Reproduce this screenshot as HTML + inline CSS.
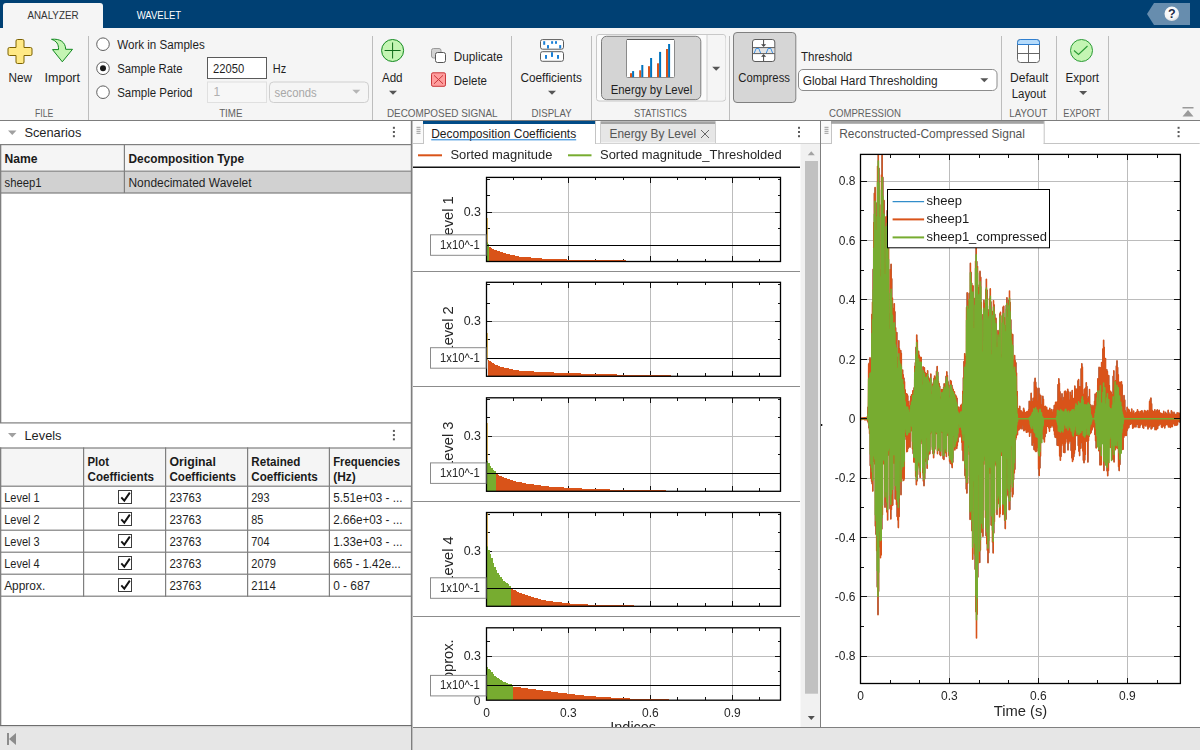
<!DOCTYPE html>
<html lang="en"><head><meta charset="utf-8"><title>Wavelet Signal Analyzer</title>
<style>
html,body{margin:0;padding:0;}
body{width:1200px;height:750px;overflow:hidden;background:#fff;font-family:"Liberation Sans",sans-serif;font-size:12px;color:#1a1a1a;}
#app{position:relative;width:1200px;height:750px;overflow:hidden;background:#fff;}
.abs{position:absolute;}
.t{position:absolute;white-space:nowrap;line-height:1;}
/* header */
.hdr{position:absolute;left:0;top:0;width:1200px;height:28px;background:#004073;}
.tabA{position:absolute;left:3px;top:3px;width:100px;height:25px;background:#f5f5f5;border-radius:3px 3px 0 0;}
.strip{position:absolute;left:0;top:28px;width:1200px;height:92px;background:#f5f5f5;}
.stripline{position:absolute;left:0;top:120px;width:1200px;height:1px;background:#7d7d7d;}
.vsep{position:absolute;width:1px;background:#c9c9c9;top:36px;height:83px;}
.seclbl{position:absolute;top:107px;font-size:11px;color:#666;white-space:nowrap;line-height:1;transform:translateX(-50%);}
.statusbar{position:absolute;left:0;top:727px;width:1200px;height:23px;background:#f0f0f0;border-top:1px solid #b5b5b5;box-sizing:border-box;}

.gl{will-change:transform;}

</style></head>
<body>
<div id="app">
<div class="hdr"></div><div class="tabA"></div><div class="strip"></div><div class="stripline"></div>
<svg class="abs" style="left:0;top:0" width="1200" height="121" viewBox="0 0 1200 121" font-family='"Liberation Sans",sans-serif'>
<text x="27.5" y="18.7" font-size="11" fill="#333" font-weight="normal" text-anchor="start" textLength="51" lengthAdjust="spacingAndGlyphs">ANALYZER</text>
<text x="136.7" y="18.7" font-size="11" fill="#fff" font-weight="normal" text-anchor="start" textLength="44.5" lengthAdjust="spacingAndGlyphs">WAVELET</text>
<path d="M1147 14L1154 3H1190V25H1154Z" fill="#678dae"/>
<defs><radialGradient id="hg" cx="0.45" cy="0.35" r="0.7"><stop offset="0" stop-color="#fff"/><stop offset="0.7" stop-color="#f4f4f4"/><stop offset="1" stop-color="#c9ced3"/></radialGradient></defs>
<circle cx="1171.8" cy="13.8" r="7.3" fill="url(#hg)"/>
<text x="1171.8" y="18.3" font-size="12.5" fill="#1d2b45" font-weight="bold" text-anchor="middle">?</text>
<rect x="88" y="36" width="1" height="84" fill="#bdbdbd"/>
<rect x="372" y="36" width="1" height="84" fill="#bdbdbd"/>
<rect x="511" y="36" width="1" height="84" fill="#bdbdbd"/>
<rect x="591" y="36" width="1" height="84" fill="#bdbdbd"/>
<rect x="729" y="36" width="1" height="84" fill="#bdbdbd"/>
<rect x="1001" y="36" width="1" height="84" fill="#bdbdbd"/>
<rect x="1056" y="36" width="1" height="84" fill="#bdbdbd"/>
<rect x="1108" y="36" width="1" height="84" fill="#bdbdbd"/>
<text x="44.2" y="116.7" font-size="11" fill="#616161" font-weight="normal" text-anchor="middle" textLength="18.3" lengthAdjust="spacingAndGlyphs">FILE</text>
<text x="230.8" y="116.7" font-size="11" fill="#616161" font-weight="normal" text-anchor="middle" textLength="23.3" lengthAdjust="spacingAndGlyphs">TIME</text>
<text x="442.2" y="116.7" font-size="11" fill="#616161" font-weight="normal" text-anchor="middle" textLength="110.6" lengthAdjust="spacingAndGlyphs">DECOMPOSED SIGNAL</text>
<text x="551.6" y="116.7" font-size="11" fill="#616161" font-weight="normal" text-anchor="middle" textLength="40" lengthAdjust="spacingAndGlyphs">DISPLAY</text>
<text x="660.3" y="116.7" font-size="11" fill="#616161" font-weight="normal" text-anchor="middle" textLength="52.7" lengthAdjust="spacingAndGlyphs">STATISTICS</text>
<text x="865" y="116.7" font-size="11" fill="#616161" font-weight="normal" text-anchor="middle" textLength="72" lengthAdjust="spacingAndGlyphs">COMPRESSION</text>
<text x="1028.3" y="116.7" font-size="11" fill="#616161" font-weight="normal" text-anchor="middle" textLength="38" lengthAdjust="spacingAndGlyphs">LAYOUT</text>
<text x="1082" y="116.7" font-size="11" fill="#616161" font-weight="normal" text-anchor="middle" textLength="37.4" lengthAdjust="spacingAndGlyphs">EXPORT</text>
<path d="M17.5 39.5h5a1.5 1.5 0 0 1 1.5 1.5v6.5h6.5a1.5 1.5 0 0 1 1.5 1.5v5a1.5 1.5 0 0 1 -1.5 1.5h-6.5v6.500a1.5 1.5 0 0 1 -1.5 1.5h-5a1.5 1.5 0 0 1 -1.5 -1.5v-6.5h-6.5a1.5 1.5 0 0 1 -1.5 -1.5v-5a1.5 1.5 0 0 1 1.500 -1.5h6.5v-6.5a1.500 1.5 0 0 1 1.5 -1.5z" fill="#ffe985" stroke="#7d6200" stroke-width="1"/>
<text x="8.5" y="82" font-size="12" fill="#1f1f1f" font-weight="normal" text-anchor="start" textLength="23.5" lengthAdjust="spacingAndGlyphs">New</text>
<path d="M51.500 39.300C60 38.500 65.500 42 65.700 49.300L72.500 49.300L62.300 61.800L52.500 49.600L58.500 49.600C58.800 44 56.500 41 51.500 39.300Z" fill="#c4f5b3" stroke="#12891f" stroke-width="1" stroke-linejoin="round"/>
<text x="44.5" y="82" font-size="12" fill="#1f1f1f" font-weight="normal" text-anchor="start" textLength="35.5" lengthAdjust="spacingAndGlyphs">Import</text>
<circle cx="103" cy="44.2" r="6.300" fill="#fff" stroke="#5f5f5f" stroke-width="1"/>
<circle cx="103" cy="68.3" r="6.300" fill="#fff" stroke="#5f5f5f" stroke-width="1"/>
<circle cx="103" cy="92.2" r="6.300" fill="#fff" stroke="#5f5f5f" stroke-width="1"/>
<circle cx="103" cy="68.3" r="3" fill="#1a1a1a"/>
<text x="117.2" y="49.0" font-size="12" fill="#1f1f1f" font-weight="normal" text-anchor="start" textLength="87.5" lengthAdjust="spacingAndGlyphs">Work in Samples</text>
<text x="117.2" y="72.8" font-size="12" fill="#1f1f1f" font-weight="normal" text-anchor="start" textLength="65.3" lengthAdjust="spacingAndGlyphs">Sample Rate</text>
<text x="117.2" y="96.7" font-size="12" fill="#1f1f1f" font-weight="normal" text-anchor="start" textLength="75.3" lengthAdjust="spacingAndGlyphs">Sample Period</text>
<rect x="207.500" y="57.500" width="59" height="21" fill="#fff" stroke="#5a5a5a"/>
<text x="213" y="72.5" font-size="12" fill="#1f1f1f" font-weight="normal" text-anchor="start" textLength="31.2" lengthAdjust="spacingAndGlyphs">22050</text>
<text x="272.8" y="72.5" font-size="12" fill="#1f1f1f" font-weight="normal" text-anchor="start" textLength="13.4" lengthAdjust="spacingAndGlyphs">Hz</text>
<rect x="207.500" y="82" width="59" height="20.500" fill="#f7f7f7" stroke="#e0e0e0"/>
<text x="213.5" y="96.4" font-size="12" fill="#b0b0b0" font-weight="normal" text-anchor="start">1</text>
<rect x="269.500" y="82" width="99" height="20.500" rx="4" fill="#f5f5f5" stroke="#cfcfcf"/>
<text x="274.5" y="96.5" font-size="12" fill="#a8a8a8" font-weight="normal" text-anchor="start" textLength="42.2" lengthAdjust="spacingAndGlyphs">seconds</text>
<path d="M352.3 89.8h8l-4.0 4z" fill="#b5b5b5"/>
<circle cx="392.600" cy="50.5" r="11" fill="#c4f5b3" stroke="#12891f" stroke-width="1"/>
<path d="M392.6 42.500v16M384.600 50.5h16" stroke="#0f6a18" stroke-width="1" fill="none"/>
<text x="381.9" y="82" font-size="12" fill="#1f1f1f" font-weight="normal" text-anchor="start" textLength="20.7" lengthAdjust="spacingAndGlyphs">Add</text>
<path d="M389.0 90.7h8l-4.0 4z" fill="#555"/>
<rect x="431.500" y="48.500" width="9.500" height="9.500" rx="2" fill="#d2d2d2" stroke="#9a9a9a"/>
<rect x="435.500" y="52.500" width="10" height="10" rx="2" fill="#fff" stroke="#555"/>
<text x="453.8" y="61" font-size="12" fill="#1f1f1f" font-weight="normal" text-anchor="start" textLength="49" lengthAdjust="spacingAndGlyphs">Duplicate</text>
<rect x="431.500" y="72.800" width="14" height="13.500" rx="1.5" fill="#ff9d9d" stroke="#c8373a"/>
<path d="M434 75.300l9 8.500M443 75.300l-9 8.500" stroke="#c8373a" stroke-width="1" fill="none"/>
<text x="453.8" y="84.8" font-size="12" fill="#1f1f1f" font-weight="normal" text-anchor="start" textLength="33.2" lengthAdjust="spacingAndGlyphs">Delete</text>
<rect x="540.500" y="39.600" width="23" height="9.600" rx="2" fill="#fff" stroke="#5c5c5c"/>
<rect x="540.500" y="51.700" width="23" height="9.600" rx="2" fill="#fff" stroke="#5c5c5c"/>
<rect x="543.2" y="41.2" width="2" height="3.6" fill="#1a7fd6"/>
<rect x="547" y="45.1" width="2" height="3.4" fill="#1a7fd6"/>
<rect x="551.1" y="41.2" width="2" height="2.6" fill="#1a7fd6"/>
<rect x="555" y="41.2" width="2" height="2.6" fill="#1a7fd6"/>
<rect x="559.2" y="45.1" width="2" height="3.4" fill="#1a7fd6"/>
<rect x="545" y="55" width="2" height="3.8" fill="#1a7fd6"/>
<rect x="551" y="52.2" width="2" height="4.7" fill="#1a7fd6"/>
<rect x="557" y="55" width="2" height="3.8" fill="#1a7fd6"/>
<text x="520.5" y="82" font-size="12" fill="#1f1f1f" font-weight="normal" text-anchor="start" textLength="61.3" lengthAdjust="spacingAndGlyphs">Coefficients</text>
<path d="M548.0 90.7h8l-4.0 4z" fill="#555"/>
<rect x="596.500" y="34.500" width="129" height="66.500" rx="2.500" fill="#fbfbfb" stroke="#c8c8c8"/>
<path d="M707 35h14.500a4 4 0 0 1 4 4v57.500a4 4 0 0 1 -4 4h-14.500z" fill="#f5f5f5"/>
<rect x="706.500" y="35" width="1" height="66" fill="#d0d0d0"/>
<rect x="601.500" y="36.300" width="99.300" height="63.300" rx="5" fill="#d4d4d4" stroke="#7d7d7d"/>
<rect x="626.500" y="39.500" width="48" height="38" rx="1" fill="#fff" stroke="#8a8a8a"/>
<rect x="627" y="39" width="47" height="1" fill="#5a5a5a"/>
<rect x="630" y="73.2" width="2" height="4.0" fill="#d95319"/>
<rect x="632.1" y="71.1" width="2" height="6.1" fill="#0072bd"/>
<rect x="639.2" y="70.3" width="2" height="6.9" fill="#d95319"/>
<rect x="641.3" y="65" width="2" height="12.2" fill="#0072bd"/>
<rect x="648" y="66.2" width="2" height="11.0" fill="#d95319"/>
<rect x="650.1" y="58" width="2" height="19.2" fill="#0072bd"/>
<rect x="657" y="63.3" width="2" height="13.9" fill="#d95319"/>
<rect x="659.1" y="51.9" width="2" height="25.3" fill="#0072bd"/>
<rect x="666" y="49" width="2" height="28.2" fill="#d95319"/>
<rect x="668.1" y="44" width="2" height="33.2" fill="#0072bd"/>
<text x="610.7" y="94.3" font-size="12" fill="#1f1f1f" font-weight="normal" text-anchor="start" textLength="81.5" lengthAdjust="spacingAndGlyphs">Energy by Level</text>
<path d="M712.2 66.7h8l-4.0 4z" fill="#555"/>
<rect x="733.500" y="32.500" width="62.300" height="70" rx="3.500" fill="#d6d6d6" stroke="#808080"/>
<rect x="752.500" y="39.500" width="22.300" height="22" rx="2.500" fill="#fff" stroke="#5c5c5c"/>
<rect x="753" y="48" width="21.300" height="5.500" fill="#e4e4e4"/>
<path d="M752.500 47.600h22.300M752.500 53.600h22.300" stroke="#5c5c5c" stroke-width="1" fill="none"/>
<path d="M754.300 53l1.800 -4.500h2.700l1.800 4.500M766.300 53l1.800 -4.500h2.700l1.800 4.500" stroke="#3b92e6" stroke-width="1" fill="none"/>
<path d="M763.600 40v6M763.600 61v-6" stroke="#4a4a4a" stroke-width="1" fill="none"/>
<path d="M761 44.300h5.200l-2.600 2.800zM761 56.800h5.200l-2.600 -2.800z" fill="#4a4a4a"/>
<text x="738.3" y="81.7" font-size="12" fill="#1f1f1f" font-weight="normal" text-anchor="start" textLength="51.7" lengthAdjust="spacingAndGlyphs">Compress</text>
<text x="801" y="61" font-size="12" fill="#1f1f1f" font-weight="normal" text-anchor="start" textLength="51.3" lengthAdjust="spacingAndGlyphs">Threshold</text>
<rect x="798.500" y="69.500" width="198.500" height="21" rx="4.500" fill="#fff" stroke="#8c8c8c"/>
<text x="802.7" y="84.7" font-size="12" fill="#1f1f1f" font-weight="normal" text-anchor="start" textLength="135" lengthAdjust="spacingAndGlyphs">Global Hard Thresholding</text>
<path d="M980.3 78.2h8l-4.0 4z" fill="#555"/>
<rect x="1017.500" y="39.500" width="22" height="23" rx="3" fill="#fff" stroke="#666"/>
<path d="M1017.500 44.500v-2a3 3 0 0 1 3 -3h16a3 3 0 0 1 3 3v2z" fill="#b5dbfb" stroke="#2f7fd0" stroke-width="1"/>
<path d="M1018 53.500h21M1028.500 45v17.500" stroke="#666" stroke-width="1" fill="none"/>
<text x="1010" y="81.7" font-size="12" fill="#1f1f1f" font-weight="normal" text-anchor="start" textLength="38.3" lengthAdjust="spacingAndGlyphs">Default</text>
<text x="1011.7" y="98.3" font-size="12" fill="#1f1f1f" font-weight="normal" text-anchor="start" textLength="34.3" lengthAdjust="spacingAndGlyphs">Layout</text>
<circle cx="1081.500" cy="50.500" r="11" fill="#c4f5b3" stroke="#2a9a35"/>
<path d="M1074 50.500l4.500 4l9 -8.500" stroke="#2a9a35" stroke-width="1.100" fill="none"/>
<text x="1065.5" y="81.7" font-size="12" fill="#1f1f1f" font-weight="normal" text-anchor="start" textLength="33.5" lengthAdjust="spacingAndGlyphs">Export</text>
<path d="M1079.2 91.0h8l-4.0 4z" fill="#555"/>
<rect x="1182.500" y="107" width="11" height="1.500" fill="#9a9a9a"/>
<path d="M1182.500 116.500l5.500 -6.500l5.500 6.500z" fill="#9a9a9a"/>
</svg>
<svg class="abs" style="left:0;top:121px" width="413" height="629" viewBox="0 121 413 629" font-family='"Liberation Sans",sans-serif'>
<rect x="0" y="121" width="413" height="606" fill="#fff"/>
<path d="M8 130.500h8.500l-4.250 4.500z" fill="#a0a0a0"/>
<text x="24.4" y="137" font-size="13" fill="#1f1f1f" font-weight="normal" text-anchor="start" textLength="57" lengthAdjust="spacingAndGlyphs">Scenarios</text>
<rect x="392.9" y="126.8" width="2" height="2" fill="#595959"/><rect x="392.9" y="131" width="2" height="2" fill="#595959"/><rect x="392.9" y="135.2" width="2" height="2" fill="#595959"/>
<rect x="1" y="145" width="410" height="26" fill="#f5f5f5"/>
<rect x="1" y="172" width="410" height="21" fill="#d1d1d1"/>
<rect x="0" y="144" width="412" height="1.200" fill="#7f7f7f"/>
<rect x="0" y="170.600" width="412" height="1.200" fill="#7f7f7f"/>
<rect x="0" y="192.400" width="412" height="1.200" fill="#7f7f7f"/>
<rect x="123.800" y="144" width="1.200" height="49" fill="#7f7f7f"/>
<text x="4.6" y="163.1" font-size="12" fill="#1a1a1a" font-weight="bold" text-anchor="start" textLength="33" lengthAdjust="spacingAndGlyphs">Name</text>
<text x="128.5" y="163.1" font-size="12" fill="#1a1a1a" font-weight="bold" text-anchor="start" textLength="115.5" lengthAdjust="spacingAndGlyphs">Decomposition Type</text>
<text x="4.5" y="186.7" font-size="12" fill="#1f1f1f" font-weight="normal" text-anchor="start" textLength="37" lengthAdjust="spacingAndGlyphs">sheep1</text>
<text x="128.5" y="186.7" font-size="12" fill="#1f1f1f" font-weight="normal" text-anchor="start" textLength="123" lengthAdjust="spacingAndGlyphs">Nondecimated Wavelet</text>
<rect x="0" y="144" width="1.300" height="279" fill="#7f7f7f"/>
<rect x="410.800" y="121" width="1.700" height="629" fill="#7f7f7f"/>
<rect x="0" y="422.300" width="412" height="1.200" fill="#7f7f7f"/>
<path d="M8 433h8.500l-4.250 4.500z" fill="#a0a0a0"/>
<text x="24.5" y="440.2" font-size="13" fill="#1f1f1f" font-weight="normal" text-anchor="start" textLength="37" lengthAdjust="spacingAndGlyphs">Levels</text>
<rect x="392.9" y="429.90000000000003" width="2" height="2" fill="#595959"/><rect x="392.9" y="434.1" width="2" height="2" fill="#595959"/><rect x="392.9" y="438.3" width="2" height="2" fill="#595959"/>
<rect x="1" y="448" width="410" height="38" fill="#f5f5f5"/>
<rect x="0" y="447.4" width="412" height="1.200" fill="#7f7f7f"/>
<rect x="0" y="485.6" width="412" height="1.200" fill="#7f7f7f"/>
<rect x="0" y="507.6" width="412" height="1.200" fill="#7f7f7f"/>
<rect x="0" y="529.6" width="412" height="1.200" fill="#7f7f7f"/>
<rect x="0" y="551.6" width="412" height="1.200" fill="#7f7f7f"/>
<rect x="0" y="573.6" width="412" height="1.200" fill="#7f7f7f"/>
<rect x="0" y="595.6" width="412" height="1.200" fill="#7f7f7f"/>
<rect x="83" y="447.400" width="1.200" height="149.400" fill="#7f7f7f"/>
<rect x="165" y="447.400" width="1.200" height="149.400" fill="#7f7f7f"/>
<rect x="247" y="447.400" width="1.200" height="149.400" fill="#7f7f7f"/>
<rect x="328.8" y="447.400" width="1.200" height="149.400" fill="#7f7f7f"/>
<rect x="0" y="447.400" width="1.300" height="279" fill="#7f7f7f"/>
<text x="87.5" y="465.8" font-size="12" fill="#1a1a1a" font-weight="bold" text-anchor="start" textLength="21.5" lengthAdjust="spacingAndGlyphs">Plot</text>
<text x="87.5" y="480.8" font-size="12" fill="#1a1a1a" font-weight="bold" text-anchor="start" textLength="66.5" lengthAdjust="spacingAndGlyphs">Coefficients</text>
<text x="169.4" y="465.8" font-size="12" fill="#1a1a1a" font-weight="bold" text-anchor="start" textLength="46.5" lengthAdjust="spacingAndGlyphs">Original</text>
<text x="169.4" y="480.8" font-size="12" fill="#1a1a1a" font-weight="bold" text-anchor="start" textLength="66.5" lengthAdjust="spacingAndGlyphs">Coefficients</text>
<text x="251.3" y="465.8" font-size="12" fill="#1a1a1a" font-weight="bold" text-anchor="start" textLength="49" lengthAdjust="spacingAndGlyphs">Retained</text>
<text x="251.3" y="480.8" font-size="12" fill="#1a1a1a" font-weight="bold" text-anchor="start" textLength="66.5" lengthAdjust="spacingAndGlyphs">Coefficients</text>
<text x="333.2" y="465.8" font-size="12" fill="#1a1a1a" font-weight="bold" text-anchor="start" textLength="66.8" lengthAdjust="spacingAndGlyphs">Frequencies</text>
<text x="333.2" y="480.8" font-size="12" fill="#1a1a1a" font-weight="bold" text-anchor="start" textLength="22.5" lengthAdjust="spacingAndGlyphs">(Hz)</text>
<text x="4.2" y="501.5" font-size="12" fill="#1f1f1f" font-weight="normal" text-anchor="start" textLength="35.4" lengthAdjust="spacingAndGlyphs">Level 1</text>
<rect x="118.500" y="490.5" width="13" height="13" fill="#fff" stroke="#3c3c3c" stroke-width="1"/>
<path d="M121.300 497.3l3 3.300l5.500 -8" stroke="#111" stroke-width="1.900" fill="none"/>
<text x="169.4" y="501.5" font-size="12" fill="#1f1f1f" font-weight="normal" text-anchor="start" textLength="31.9" lengthAdjust="spacingAndGlyphs">23763</text>
<text x="251.3" y="501.5" font-size="12" fill="#1f1f1f" font-weight="normal" text-anchor="start" textLength="18.2" lengthAdjust="spacingAndGlyphs">293</text>
<text x="333.2" y="501.5" font-size="12" fill="#1f1f1f" font-weight="normal" text-anchor="start" textLength="69.3" lengthAdjust="spacingAndGlyphs">5.51e+03 - ...</text>
<text x="4.2" y="523.5" font-size="12" fill="#1f1f1f" font-weight="normal" text-anchor="start" textLength="35.4" lengthAdjust="spacingAndGlyphs">Level 2</text>
<rect x="118.500" y="512.5" width="13" height="13" fill="#fff" stroke="#3c3c3c" stroke-width="1"/>
<path d="M121.300 519.3l3 3.300l5.500 -8" stroke="#111" stroke-width="1.900" fill="none"/>
<text x="169.4" y="523.5" font-size="12" fill="#1f1f1f" font-weight="normal" text-anchor="start" textLength="31.9" lengthAdjust="spacingAndGlyphs">23763</text>
<text x="251.3" y="523.5" font-size="12" fill="#1f1f1f" font-weight="normal" text-anchor="start" textLength="12.1" lengthAdjust="spacingAndGlyphs">85</text>
<text x="333.2" y="523.5" font-size="12" fill="#1f1f1f" font-weight="normal" text-anchor="start" textLength="69.3" lengthAdjust="spacingAndGlyphs">2.66e+03 - ...</text>
<text x="4.2" y="545.5" font-size="12" fill="#1f1f1f" font-weight="normal" text-anchor="start" textLength="35.4" lengthAdjust="spacingAndGlyphs">Level 3</text>
<rect x="118.500" y="534.5" width="13" height="13" fill="#fff" stroke="#3c3c3c" stroke-width="1"/>
<path d="M121.300 541.3l3 3.300l5.500 -8" stroke="#111" stroke-width="1.900" fill="none"/>
<text x="169.4" y="545.5" font-size="12" fill="#1f1f1f" font-weight="normal" text-anchor="start" textLength="31.9" lengthAdjust="spacingAndGlyphs">23763</text>
<text x="251.3" y="545.5" font-size="12" fill="#1f1f1f" font-weight="normal" text-anchor="start" textLength="18.2" lengthAdjust="spacingAndGlyphs">704</text>
<text x="333.2" y="545.5" font-size="12" fill="#1f1f1f" font-weight="normal" text-anchor="start" textLength="69.3" lengthAdjust="spacingAndGlyphs">1.33e+03 - ...</text>
<text x="4.2" y="567.5" font-size="12" fill="#1f1f1f" font-weight="normal" text-anchor="start" textLength="35.4" lengthAdjust="spacingAndGlyphs">Level 4</text>
<rect x="118.500" y="556.5" width="13" height="13" fill="#fff" stroke="#3c3c3c" stroke-width="1"/>
<path d="M121.300 563.3l3 3.300l5.500 -8" stroke="#111" stroke-width="1.900" fill="none"/>
<text x="169.4" y="567.5" font-size="12" fill="#1f1f1f" font-weight="normal" text-anchor="start" textLength="31.9" lengthAdjust="spacingAndGlyphs">23763</text>
<text x="251.3" y="567.5" font-size="12" fill="#1f1f1f" font-weight="normal" text-anchor="start" textLength="24.5" lengthAdjust="spacingAndGlyphs">2079</text>
<text x="333.2" y="567.5" font-size="12" fill="#1f1f1f" font-weight="normal" text-anchor="start" textLength="67.5" lengthAdjust="spacingAndGlyphs">665 - 1.42e...</text>
<text x="4.2" y="589.5" font-size="12" fill="#1f1f1f" font-weight="normal" text-anchor="start" textLength="41" lengthAdjust="spacingAndGlyphs">Approx.</text>
<rect x="118.500" y="578.5" width="13" height="13" fill="#fff" stroke="#3c3c3c" stroke-width="1"/>
<path d="M121.300 585.3l3 3.300l5.500 -8" stroke="#111" stroke-width="1.900" fill="none"/>
<text x="169.4" y="589.5" font-size="12" fill="#1f1f1f" font-weight="normal" text-anchor="start" textLength="31.9" lengthAdjust="spacingAndGlyphs">23763</text>
<text x="251.3" y="589.5" font-size="12" fill="#1f1f1f" font-weight="normal" text-anchor="start" textLength="24.5" lengthAdjust="spacingAndGlyphs">2114</text>
<text x="333.2" y="589.5" font-size="12" fill="#1f1f1f" font-weight="normal" text-anchor="start" textLength="37" lengthAdjust="spacingAndGlyphs">0 - 687</text>
<rect x="0" y="725" width="412" height="1.200" fill="#6e6e6e"/>
<rect x="0" y="726.200" width="411" height="24" fill="#e6e6e6"/>
<rect x="0" y="726.200" width="411" height="1" fill="#cfcfcf"/>
<rect x="7" y="733" width="2" height="12" fill="#8c8c8c"/>
<path d="M16 733v12l-7 -6z" fill="#8c8c8c"/>
</svg>
<svg class="abs gl" style="left:413px;top:121px" width="409" height="629" viewBox="413 121 409 629" font-family='"Liberation Sans",sans-serif'>
<rect x="413" y="121" width="409" height="607" fill="#fff"/>
<rect x="418" y="154.300" width="24" height="2" fill="#d95319"/>
<text x="450.4" y="159" font-size="13" fill="#262626" font-weight="normal" text-anchor="start" textLength="102" lengthAdjust="spacingAndGlyphs">Sorted magnitude</text>
<rect x="568" y="154.300" width="23.500" height="2" fill="#77ac30"/>
<text x="600" y="159" font-size="13" fill="#262626" font-weight="normal" text-anchor="start" textLength="181.6" lengthAdjust="spacingAndGlyphs">Sorted magnitude_Thresholded</text>
<rect x="413" y="166.500" width="387" height="1.500" fill="#111"/>
<rect x="413" y="271" width="387" height="1" fill="#8c8c8c"/>
<rect x="413" y="386" width="387" height="1" fill="#8c8c8c"/>
<rect x="413" y="501" width="387" height="1" fill="#8c8c8c"/>
<rect x="413" y="616" width="387" height="1" fill="#8c8c8c"/>
<clipPath id="cc"><rect x="413" y="168" width="387" height="559"/></clipPath><g clip-path="url(#cc)">
<rect x="568" y="177.4" width="1" height="84.1" fill="#bcbcbc" shape-rendering="crispEdges"/>
<rect x="650" y="177.4" width="1" height="84.1" fill="#bcbcbc" shape-rendering="crispEdges"/>
<rect x="732" y="177.4" width="1" height="84.1" fill="#bcbcbc" shape-rendering="crispEdges"/>
<rect x="486.5" y="212" width="294.0" height="1" fill="#bcbcbc" shape-rendering="crispEdges"/>
<path d="M513.8 261.5v-3M513.8 177.4v3M541.1 261.5v-3M541.1 177.4v3M568.5 261.5v-5.5M568.5 177.4v5.5M595.8 261.5v-3M595.8 177.4v3M623.1 261.5v-3M623.1 177.4v3M650.4 261.5v-5.5M650.4 177.4v5.5M677.8 261.5v-3M677.8 177.4v3M705.1 261.5v-3M705.1 177.4v3M732.4 261.5v-5.5M732.4 177.4v5.5M759.7 261.5v-3M759.7 177.4v3M486.5 245.3h3M780.5 245.3h-3M486.5 228.8h3M780.5 228.8h-3M486.5 212.4h5.5M780.5 212.4h-5.5M486.5 195.9h3M780.5 195.9h-3M486.5 179.5h3M780.5 179.5h-3" stroke="#111" stroke-width="1" fill="none" shape-rendering="crispEdges"/>
<path d="M486.5 261.5V242H488.0V244H489.0V261.5Z" fill="#77ac30" shape-rendering="crispEdges"/>
<path d="M489.0 261.5V247H490.5V248H492.0V249H493.5V250H495.0H496.5V251H498.0H499.5V252H501.0H502.5V253H504.0H505.5V254H507.0H508.5H510.0V255H511.5H513.0H514.5V256H516.0H517.5H519.0V257H520.5H522.0H523.5H525.0H526.5H528.0H529.5H531.0V258H532.5H534.0H535.5H537.0H538.5H540.0H541.5V259H543.0H544.5H546.0H547.5H549.0H550.5H552.0H553.5H555.0H556.5H558.0H559.5H561.0H562.5H564.0H565.5H567.0V260H568.5H570.0H571.5H573.0H574.5H576.0H577.5H579.0H580.5H582.0H583.5H585.0H586.5H588.0H589.5H591.0H592.5H594.0H595.5H597.0H598.5H600.0H601.5H603.0H604.5H606.0H607.5H609.0H610.5H612.0H613.5H615.0H616.5H618.0H619.5H621.0H622.5H624.0H625.5H626.0V261.5Z" fill="#d95319" shape-rendering="crispEdges"/>
<rect x="486.8" y="218" width="1" height="24.7" fill="#e3b23a"/>
<rect x="486.5" y="245" width="294.0" height="1" fill="#000" shape-rendering="crispEdges"/>
<rect x="486.5" y="177.4" width="294.0" height="84.1" fill="none" stroke="#000" stroke-width="1.300"/>
<text x="481" y="215.8" font-size="12" fill="#262626" font-weight="normal" text-anchor="end" textLength="17.3" lengthAdjust="spacingAndGlyphs">0.3</text>
<text transform="translate(453 220.0) rotate(-90)" font-size="14.670" fill="#262626" text-anchor="middle">Level 1</text>
<rect x="430.500" y="234.8" width="55.500" height="20.500" fill="#fff" stroke="#8a8a8a"/>
<text x="440" y="248.8" font-size="12" fill="#262626" font-weight="normal" text-anchor="start" textLength="39.7" lengthAdjust="spacingAndGlyphs">1x10^-1</text>
<rect x="568" y="282.3" width="1" height="94.0" fill="#bcbcbc" shape-rendering="crispEdges"/>
<rect x="650" y="282.3" width="1" height="94.0" fill="#bcbcbc" shape-rendering="crispEdges"/>
<rect x="732" y="282.3" width="1" height="94.0" fill="#bcbcbc" shape-rendering="crispEdges"/>
<rect x="486.5" y="321" width="294.0" height="1" fill="#bcbcbc" shape-rendering="crispEdges"/>
<path d="M513.8 376.3v-3M513.8 282.3v3M541.1 376.3v-3M541.1 282.3v3M568.5 376.3v-5.5M568.5 282.3v5.5M595.8 376.3v-3M595.8 282.3v3M623.1 376.3v-3M623.1 282.3v3M650.4 376.3v-5.5M650.4 282.3v5.5M677.8 376.3v-3M677.8 282.3v3M705.1 376.3v-3M705.1 282.3v3M732.4 376.3v-5.5M732.4 282.3v5.5M759.7 376.3v-3M759.7 282.3v3M486.5 358.2h3M780.5 358.2h-3M486.5 339.8h3M780.5 339.8h-3M486.5 321.5h5.5M780.5 321.5h-5.5M486.5 303.1h3M780.5 303.1h-3M486.5 284.8h3M780.5 284.8h-3" stroke="#111" stroke-width="1" fill="none" shape-rendering="crispEdges"/>
<path d="M487.5 376.3V360H489.0V361H490.5V362H492.0V363H493.5V364H495.0V365H496.5H498.0V366H499.5V367H501.0H502.5H504.0V368H505.5H507.0H508.5V369H510.0H511.5H513.0V370H514.5H516.0H517.5H519.0V371H520.5H522.0H523.5H525.0H526.5H528.0H529.5H531.0H532.5H534.0V372H535.5H537.0H538.5H540.0H541.5H543.0H544.5H546.0H547.5H549.0H550.5H552.0H553.5V373H555.0H556.5H558.0H559.5H561.0H562.5H564.0H565.5H567.0H568.5H570.0H571.5H573.0H574.5H576.0H577.5H579.0H580.5V374H582.0H583.5H585.0H586.5H588.0H589.5H591.0H592.5H594.0H595.5H597.0H598.5H600.0H601.5H603.0H604.5H606.0H607.5H609.0H610.5H612.0H613.5H615.0H616.5V375H618.0H619.5H621.0H622.5H624.0H625.5H627.0H628.5H630.0H631.5H633.0H634.5H636.0H637.5H639.0H640.5H642.0H643.5H645.0H646.5H648.0H649.5H651.0H652.5H654.0H655.5H657.0H658.5H660.0H661.5H663.0H664.5H666.0H667.5H669.0H670.5V376H672.0H673.5H675.0H676.0V376.3Z" fill="#d95319" shape-rendering="crispEdges"/>
<rect x="486.8" y="333" width="1" height="27.3" fill="#e3b23a"/>
<rect x="486.5" y="358" width="294.0" height="1" fill="#000" shape-rendering="crispEdges"/>
<rect x="486.5" y="282.3" width="294.0" height="94.0" fill="none" stroke="#000" stroke-width="1.300"/>
<text x="481" y="324.9" font-size="12" fill="#262626" font-weight="normal" text-anchor="end" textLength="17.3" lengthAdjust="spacingAndGlyphs">0.3</text>
<text transform="translate(453 329.9) rotate(-90)" font-size="14.670" fill="#262626" text-anchor="middle">Level 2</text>
<rect x="430.500" y="347.7" width="55.500" height="20.500" fill="#fff" stroke="#8a8a8a"/>
<text x="440" y="361.7" font-size="12" fill="#262626" font-weight="normal" text-anchor="start" textLength="39.7" lengthAdjust="spacingAndGlyphs">1x10^-1</text>
<rect x="568" y="397.8" width="1" height="93.5" fill="#bcbcbc" shape-rendering="crispEdges"/>
<rect x="650" y="397.8" width="1" height="93.5" fill="#bcbcbc" shape-rendering="crispEdges"/>
<rect x="732" y="397.8" width="1" height="93.5" fill="#bcbcbc" shape-rendering="crispEdges"/>
<rect x="486.5" y="436" width="294.0" height="1" fill="#bcbcbc" shape-rendering="crispEdges"/>
<path d="M513.8 491.3v-3M513.8 397.8v3M541.1 491.3v-3M541.1 397.8v3M568.5 491.3v-5.5M568.5 397.8v5.5M595.8 491.3v-3M595.8 397.8v3M623.1 491.3v-3M623.1 397.8v3M650.4 491.3v-5.5M650.4 397.8v5.5M677.8 491.3v-3M677.8 397.8v3M705.1 491.3v-3M705.1 397.8v3M732.4 491.3v-5.5M732.4 397.8v5.5M759.7 491.3v-3M759.7 397.8v3M486.5 473.4h3M780.5 473.4h-3M486.5 454.8h3M780.5 454.8h-3M486.5 436.3h5.5M780.5 436.3h-5.5M486.5 417.8h3M780.5 417.8h-3M486.5 399.2h3M780.5 399.2h-3" stroke="#111" stroke-width="1" fill="none" shape-rendering="crispEdges"/>
<path d="M486.5 491.3V461H488.0V463H489.5V466H491.0V468H492.5V470H494.0V471H495.5V472H496.0V491.3Z" fill="#77ac30" shape-rendering="crispEdges"/>
<path d="M496.0 491.3V474H497.5V475H499.0V476H500.5H502.0V477H503.5V478H505.0H506.5V479H508.0H509.5V480H511.0H512.5V481H514.0H515.5V482H517.0H518.5H520.0H521.5V483H523.0H524.5H526.0V484H527.5H529.0H530.5H532.0H533.5V485H535.0H536.5H538.0H539.5H541.0V486H542.5H544.0H545.5H547.0H548.5V487H550.0H551.5H553.0H554.5H556.0H557.5H559.0H560.5H562.0H563.5V488H565.0H566.5H568.0H569.5H571.0H572.5H574.0H575.5H577.0H578.5H580.0H581.5V489H583.0H584.5H586.0H587.5H589.0H590.5H592.0H593.5H595.0H596.5H598.0H599.5H601.0H602.5H604.0H605.5H607.0H608.5H610.0V490H611.5H613.0H614.5H616.0H617.5H619.0H620.5H622.0H623.5H625.0H626.5H628.0H629.5H631.0H632.5H634.0H635.5H637.0H638.5H640.0H641.5H643.0H644.5H646.0H647.5H649.0H650.5H652.0H653.5H655.0H656.5H658.0H659.5H661.0H662.5H664.0H665.5V491H667.0H668.5H670.0H671.5H673.0H674.5H676.0V491.3Z" fill="#d95319" shape-rendering="crispEdges"/>
<rect x="486.8" y="423" width="1" height="37.8" fill="#e3b23a"/>
<rect x="486.5" y="473" width="294.0" height="1" fill="#000" shape-rendering="crispEdges"/>
<rect x="486.5" y="397.8" width="294.0" height="93.5" fill="none" stroke="#000" stroke-width="1.300"/>
<text x="481" y="439.7" font-size="12" fill="#262626" font-weight="normal" text-anchor="end" textLength="17.3" lengthAdjust="spacingAndGlyphs">0.3</text>
<text transform="translate(453 445.2) rotate(-90)" font-size="14.670" fill="#262626" text-anchor="middle">Level 3</text>
<rect x="430.500" y="462.9" width="55.500" height="20.500" fill="#fff" stroke="#8a8a8a"/>
<text x="440" y="476.9" font-size="12" fill="#262626" font-weight="normal" text-anchor="start" textLength="39.7" lengthAdjust="spacingAndGlyphs">1x10^-1</text>
<rect x="568" y="512.5" width="1" height="93.79999999999995" fill="#bcbcbc" shape-rendering="crispEdges"/>
<rect x="650" y="512.5" width="1" height="93.79999999999995" fill="#bcbcbc" shape-rendering="crispEdges"/>
<rect x="732" y="512.5" width="1" height="93.79999999999995" fill="#bcbcbc" shape-rendering="crispEdges"/>
<rect x="486.5" y="551" width="294.0" height="1" fill="#bcbcbc" shape-rendering="crispEdges"/>
<path d="M513.8 606.3v-3M513.8 512.5v3M541.1 606.3v-3M541.1 512.5v3M568.5 606.3v-5.5M568.5 512.5v5.5M595.8 606.3v-3M595.8 512.5v3M623.1 606.3v-3M623.1 512.5v3M650.4 606.3v-5.5M650.4 512.5v5.5M677.8 606.3v-3M677.8 512.5v3M705.1 606.3v-3M705.1 512.5v3M732.4 606.3v-5.5M732.4 512.5v5.5M759.7 606.3v-3M759.7 512.5v3M486.5 588.3h3M780.5 588.3h-3M486.5 569.8h3M780.5 569.8h-3M486.5 551.2h5.5M780.5 551.2h-5.5M486.5 532.7h3M780.5 532.7h-3M486.5 514.1h3M780.5 514.1h-3" stroke="#111" stroke-width="1" fill="none" shape-rendering="crispEdges"/>
<path d="M486.5 606.3V546H488.0V550H489.5V554H491.0V558H492.5V563H494.0V567H495.5V570H497.0V573H498.5V575H500.0V577H501.5V579H503.0V581H504.5V582H506.0V583H507.5V584H509.0V586H510.5V587H511.3V606.3Z" fill="#77ac30" shape-rendering="crispEdges"/>
<path d="M511.3 606.3V589H512.8V590H514.3H515.8V591H517.3V592H518.8V593H520.3H521.8V594H523.3H524.8V595H526.3H527.8V596H529.3H530.8V597H532.3H533.8V598H535.3H536.8H538.3V599H539.8H541.3V600H542.8H544.3H545.8V601H547.3H548.8H550.3H551.8H553.3V602H554.8H556.3H557.8H559.3H560.8H562.3V603H563.8H565.3H566.8H568.3H569.8V604H571.3H572.8H574.3H575.8H577.3H578.8H580.3H581.8H583.3H584.8H586.3H587.8V605H589.3H590.8H592.3H593.8H595.3H596.8H598.3H599.8H601.3H602.8H604.3H605.8H607.3H608.8H610.3H611.8H613.3H614.8H616.3H617.8H619.3H620.8H622.3H623.8H625.3H626.8H628.3H629.8H631.3H632.8H634.3V606H635.8H637.3H638.8H640.3H641.8H643.3H644.8H646.3H647.8H649.3H650.8H652.3H653.8H655.3H656.8H658.3H659.8H661.0V606.3Z" fill="#d95319" shape-rendering="crispEdges"/>
<rect x="486.8" y="513" width="1" height="33.7" fill="#e3b23a"/>
<rect x="486.5" y="588" width="294.0" height="1" fill="#000" shape-rendering="crispEdges"/>
<rect x="486.5" y="512.5" width="294.0" height="93.79999999999995" fill="none" stroke="#000" stroke-width="1.300"/>
<text x="481" y="554.6" font-size="12" fill="#262626" font-weight="normal" text-anchor="end" textLength="17.3" lengthAdjust="spacingAndGlyphs">0.3</text>
<text transform="translate(453 560.0) rotate(-90)" font-size="14.670" fill="#262626" text-anchor="middle">Level 4</text>
<rect x="430.500" y="577.8" width="55.500" height="20.500" fill="#fff" stroke="#8a8a8a"/>
<text x="440" y="591.8" font-size="12" fill="#262626" font-weight="normal" text-anchor="start" textLength="39.7" lengthAdjust="spacingAndGlyphs">1x10^-1</text>
<rect x="568" y="627.8" width="1" height="72.40000000000009" fill="#bcbcbc" shape-rendering="crispEdges"/>
<rect x="650" y="627.8" width="1" height="72.40000000000009" fill="#bcbcbc" shape-rendering="crispEdges"/>
<rect x="732" y="627.8" width="1" height="72.40000000000009" fill="#bcbcbc" shape-rendering="crispEdges"/>
<rect x="486.5" y="656" width="294.0" height="1" fill="#bcbcbc" shape-rendering="crispEdges"/>
<path d="M513.8 700.2v-3M513.8 627.8v3M541.1 700.2v-3M541.1 627.8v3M568.5 700.2v-5.5M568.5 627.8v5.5M595.8 700.2v-3M595.8 627.8v3M623.1 700.2v-3M623.1 627.8v3M650.4 700.2v-5.5M650.4 627.8v5.5M677.8 700.2v-3M677.8 627.8v3M705.1 700.2v-3M705.1 627.8v3M732.4 700.2v-5.5M732.4 627.8v5.5M759.7 700.2v-3M759.7 627.8v3M486.5 685.9h3M780.5 685.9h-3M486.5 671.2h3M780.5 671.2h-3M486.5 656.5h5.5M780.5 656.5h-5.5M486.5 641.8h3M780.5 641.8h-3" stroke="#111" stroke-width="1" fill="none" shape-rendering="crispEdges"/>
<path d="M486.5 700.2V667H488.0V669H489.5V670H491.0V672H492.5V674H494.0V676H495.5V677H497.0V678H498.5V679H500.0V680H501.5V681H503.0V682H504.5H506.0V683H507.5V684H509.0H510.5H512.0V685H513.3V700.2Z" fill="#77ac30" shape-rendering="crispEdges"/>
<path d="M513.3 700.2V687H514.8H516.3H517.8H519.3H520.8V688H522.3H523.8H525.3H526.8H528.3V689H529.8H531.3H532.8H534.3H535.8V690H537.3H538.8H540.3H541.8H543.3V691H544.8H546.3H547.8H549.3H550.8V692H552.3H553.8H555.3H556.8H558.3V693H559.8H561.3H562.8H564.3H565.8H567.3V694H568.8H570.3H571.8H573.3H574.8V695H576.3H577.8H579.3H580.8H582.3H583.8V696H585.3H586.8H588.3H589.8H591.3H592.8H594.3H595.8V697H597.3H598.8H600.3H601.8H603.3H604.8H606.3H607.8H609.3H610.8V698H612.3H613.8H615.3H616.8H618.3H619.8H621.3H622.8H624.3H625.8H627.3H628.8H630.3V699H631.8H633.3H634.8H636.3H637.8H639.3H640.8H642.3H643.8H645.3H646.8H648.3H649.8H651.3H652.8H654.3H655.8H657.3H658.8H660.3H661.8H663.3H664.8H666.3H667.8H669.3V700H670.8H672.3H673.8H675.3H676.0V700.2Z" fill="#d95319" shape-rendering="crispEdges"/>
<rect x="486.8" y="667.3" width="1" height="0.0" fill="#e3b23a"/>
<rect x="486.5" y="685" width="294.0" height="1" fill="#000" shape-rendering="crispEdges"/>
<rect x="486.5" y="627.8" width="294.0" height="72.40000000000009" fill="none" stroke="#000" stroke-width="1.300"/>
<text x="481" y="659.9" font-size="12" fill="#262626" font-weight="normal" text-anchor="end" textLength="17.3" lengthAdjust="spacingAndGlyphs">0.3</text>
<text x="480.5" y="704.8999999999999" font-size="12" fill="#262626" font-weight="normal" text-anchor="end">0</text>
<text transform="translate(453 664.6) rotate(-90)" font-size="14.670" fill="#262626" text-anchor="middle">Approx.</text>
<rect x="430.500" y="675.4" width="55.500" height="20.500" fill="#fff" stroke="#8a8a8a"/>
<text x="440" y="689.4" font-size="12" fill="#262626" font-weight="normal" text-anchor="start" textLength="39.7" lengthAdjust="spacingAndGlyphs">1x10^-1</text>
<text x="486.5" y="716.7" font-size="12" fill="#262626" font-weight="normal" text-anchor="middle">0</text>
<text x="568.4666666666667" y="716.7" font-size="12" fill="#262626" font-weight="normal" text-anchor="middle">0.3</text>
<text x="650.4333333333333" y="716.7" font-size="12" fill="#262626" font-weight="normal" text-anchor="middle">0.6</text>
<text x="732.4" y="716.7" font-size="12" fill="#262626" font-weight="normal" text-anchor="middle">0.9</text>
<text x="633.2" y="731.5" font-size="14.67" fill="#262626" font-weight="normal" text-anchor="middle" textLength="45.8" lengthAdjust="spacingAndGlyphs">Indices</text>
</g>
<rect x="800.500" y="144" width="19.500" height="583" fill="#f1f1f1"/>
<rect x="805" y="161" width="13" height="532.700" fill="#c1c1c1"/>
<path d="M807.800 155.300h7l-3.500 -4z" fill="#a3a3a3"/>
<path d="M807.800 716h7l-3.500 4z" fill="#505050"/>
<rect x="820" y="121" width="1.300" height="607" fill="#7f7f7f"/>
<rect x="412" y="727" width="409.300" height="1" fill="#808080"/>
<rect x="413" y="728" width="409" height="22" fill="#e6e6e6"/>
</svg>
<svg class="abs" style="left:413px;top:121px" width="407" height="23" viewBox="413 121 407 23" font-family='"Liberation Sans",sans-serif'>
<rect x="413" y="121" width="407" height="23" fill="#fff"/>
<rect x="413" y="121" width="10" height="22" fill="#fafafa"/><rect x="423" y="121" width="1" height="23" fill="#c4c4c4"/><rect x="413" y="143" width="11" height="1" fill="#c4c4c4"/><rect x="416.5" y="126.8" width="4" height="1" fill="#9a9a9a"/><rect x="416.5" y="128.8" width="4" height="1" fill="#9a9a9a"/><rect x="416.5" y="130.8" width="4" height="1" fill="#9a9a9a"/><rect x="416.5" y="132.8" width="4" height="1" fill="#9a9a9a"/>
<rect x="423" y="121" width="172" height="3" fill="#004b87"/>
<rect x="595" y="121" width="1" height="23" fill="#c4c4c4"/>
<rect x="596" y="143" width="224" height="1" fill="#d4d4d4"/>
<text x="431.2" y="137.6" font-size="12.5" fill="#1a1a1a" font-weight="normal" text-anchor="start" textLength="145" lengthAdjust="spacingAndGlyphs">Decomposition Coefficients</text>
<rect x="431.200" y="139.300" width="145" height="1" fill="#1a7fd6"/>
<rect x="600.500" y="121.300" width="115" height="21.200" fill="#e6e6e6"/>
<rect x="600.500" y="121.300" width="115" height="2.700" fill="#a3a3a3"/>
<rect x="600" y="124" width="1" height="19" fill="#cdcdcd"/><rect x="715" y="124" width="1" height="19" fill="#cdcdcd"/>
<text x="609.5" y="138" font-size="12.5" fill="#555" font-weight="normal" text-anchor="start" textLength="86.6" lengthAdjust="spacingAndGlyphs">Energy By Level</text>
<path d="M701 130l8 8M709 130l-8 8" stroke="#666" stroke-width="1" fill="none"/>
<rect x="798" y="126.8" width="2" height="2" fill="#595959"/><rect x="798" y="131" width="2" height="2" fill="#595959"/><rect x="798" y="135.2" width="2" height="2" fill="#595959"/>
</svg>
<svg class="abs gl" style="left:821px;top:121px" width="379" height="629" viewBox="821 121 379 629" font-family='"Liberation Sans",sans-serif'>
<rect x="821" y="121" width="379" height="607" fill="#fff"/>
<rect x="949" y="154.4" width="1" height="529.1" fill="#bcbcbc" shape-rendering="crispEdges"/>
<rect x="1038" y="154.4" width="1" height="529.1" fill="#bcbcbc" shape-rendering="crispEdges"/>
<rect x="1127" y="154.4" width="1" height="529.1" fill="#bcbcbc" shape-rendering="crispEdges"/>
<rect x="860.5" y="656" width="319.9000000000001" height="1" fill="#bcbcbc" shape-rendering="crispEdges"/>
<rect x="860.5" y="596" width="319.9000000000001" height="1" fill="#bcbcbc" shape-rendering="crispEdges"/>
<rect x="860.5" y="537" width="319.9000000000001" height="1" fill="#bcbcbc" shape-rendering="crispEdges"/>
<rect x="860.5" y="478" width="319.9000000000001" height="1" fill="#bcbcbc" shape-rendering="crispEdges"/>
<rect x="860.5" y="418" width="319.9000000000001" height="1" fill="#bcbcbc" shape-rendering="crispEdges"/>
<rect x="860.5" y="359" width="319.9000000000001" height="1" fill="#bcbcbc" shape-rendering="crispEdges"/>
<rect x="860.5" y="299" width="319.9000000000001" height="1" fill="#bcbcbc" shape-rendering="crispEdges"/>
<rect x="860.5" y="240" width="319.9000000000001" height="1" fill="#bcbcbc" shape-rendering="crispEdges"/>
<rect x="860.5" y="181" width="319.9000000000001" height="1" fill="#bcbcbc" shape-rendering="crispEdges"/>
<clipPath id="rc"><rect x="860.5" y="154.4" width="319.9000000000001" height="529.1"/></clipPath><g clip-path="url(#rc)" fill="none" stroke-linejoin="round">
<path d="M861.0 417.9L861.3 419.5L861.6 418.1L862.0 419.4L862.3 418.2L862.6 419.0L862.9 417.9L863.2 419.0L863.6 417.9L863.9 419.1L864.2 417.8L864.5 419.7L864.8 417.7L865.2 419.6L865.5 417.8L865.8 419.6L866.1 418.1L866.4 419.6L866.8 418.1L867.1 419.7L867.4 416.5L867.7 421.2L868.0 407.1L868.4 423.1L868.7 364.0L869.0 428.0L869.3 363.1L869.6 433.5L870.0 357.8L870.3 465.6L870.6 371.1L870.9 478.3L871.2 359.5L871.6 481.2L871.9 314.4L872.2 483.8L872.5 302.3L872.8 491.1L873.2 269.3L873.5 453.7L873.8 222.6L874.1 461.2L874.4 193.3L874.8 464.1L875.1 187.5L875.4 526.0L875.7 283.3L876.0 534.3L876.4 216.1L876.7 550.7L877.0 202.7L877.3 586.9L877.6 166.3L878.0 614.7L878.3 150.0L878.6 591.3L878.9 168.2L879.2 475.3L879.6 204.8L879.9 546.8L880.2 280.9L880.5 557.7L880.8 269.9L881.2 554.9L881.5 175.1L881.8 528.9L882.1 155.2L882.4 514.8L882.8 177.2L883.1 458.3L883.4 210.4L883.7 463.8L884.0 200.5L884.4 463.6L884.7 264.0L885.0 507.2L885.3 274.3L885.6 501.0L886.0 216.9L886.3 501.8L886.6 221.1L886.9 511.9L887.2 210.6L887.6 519.9L887.9 204.1L888.2 455.3L888.5 235.3L888.8 453.0L889.2 313.8L889.5 453.6L889.8 319.4L890.1 508.7L890.4 269.5L890.8 518.9L891.1 264.2L891.4 509.5L891.7 278.8L892.0 502.9L892.4 298.1L892.7 505.1L893.0 308.3L893.3 458.0L893.6 347.7L894.0 462.9L894.3 303.8L894.6 458.3L894.9 311.7L895.2 498.9L895.6 327.9L895.9 497.9L896.2 333.4L896.5 504.5L896.8 332.5L897.2 516.5L897.5 357.2L897.8 519.9L898.1 358.3L898.4 527.6L898.8 340.7L899.1 516.5L899.4 348.6L899.7 452.0L900.0 351.7L900.4 453.7L900.7 350.5L901.0 494.7L901.3 353.2L901.6 481.3L902.0 382.6L902.3 478.1L902.6 370.0L902.9 477.1L903.2 374.7L903.6 480.5L903.9 378.1L904.2 478.9L904.5 381.9L904.8 439.5L905.2 389.9L905.5 436.3L905.8 401.6L906.1 433.5L906.4 393.9L906.8 451.8L907.1 394.3L907.4 451.3L907.7 395.9L908.0 448.6L908.4 401.6L908.7 446.6L909.0 405.9L909.3 445.3L909.6 408.6L910.0 447.2L910.3 400.9L910.6 431.2L910.9 396.3L911.2 429.5L911.6 394.8L911.9 430.2L912.2 395.5L912.5 448.8L912.8 390.9L913.2 453.4L913.5 394.6L913.8 462.0L914.1 387.8L914.4 462.1L914.8 366.2L915.1 461.2L915.4 362.7L915.7 476.2L916.0 347.4L916.4 484.7L916.7 335.0L917.0 481.1L917.3 340.4L917.6 474.4L918.0 369.0L918.3 465.4L918.6 351.3L918.9 463.8L919.2 355.1L919.6 467.5L919.9 358.0L920.2 477.4L920.5 357.2L920.8 443.7L921.2 357.6L921.5 441.0L921.8 382.3L922.1 440.5L922.4 383.3L922.8 472.8L923.1 366.9L923.4 481.1L923.7 368.0L924.0 485.8L924.4 367.7L924.7 478.8L925.0 372.3L925.3 461.6L925.6 374.6L926.0 437.1L926.3 373.7L926.6 439.3L926.9 387.3L927.2 468.3L927.6 370.7L927.9 459.8L928.2 376.8L928.5 455.1L928.8 379.7L929.2 452.3L929.5 380.0L929.8 453.7L930.1 378.1L930.4 433.8L930.8 374.1L931.1 432.0L931.4 392.1L931.7 431.0L932.0 395.9L932.4 449.5L932.7 384.5L933.0 453.5L933.3 382.9L933.6 457.7L934.0 378.4L934.3 452.8L934.6 376.1L934.9 449.1L935.2 377.7L935.6 431.9L935.9 391.2L936.2 432.4L936.5 371.3L936.8 433.8L937.2 366.6L937.5 453.8L937.8 372.3L938.1 450.5L938.4 381.5L938.8 449.6L939.1 383.6L939.4 449.7L939.7 386.2L940.0 454.7L940.4 397.0L940.7 455.6L941.0 397.0L941.3 432.3L941.6 389.5L942.0 431.7L942.3 389.7L942.6 432.6L942.9 389.9L943.2 458.6L943.6 387.6L943.9 459.4L944.2 383.8L944.5 453.5L944.8 385.1L945.2 452.0L945.5 396.9L945.8 452.3L946.1 376.2L946.4 456.4L946.8 371.9L947.1 435.5L947.4 375.5L947.7 433.6L948.0 381.7L948.4 433.2L948.7 385.0L949.0 455.5L949.3 396.3L949.6 461.2L950.0 395.6L950.3 463.3L950.6 380.5L950.9 456.3L951.2 381.6L951.6 464.8L951.9 385.2L952.2 467.6L952.5 388.0L952.8 462.2L953.2 389.5L953.5 436.6L953.8 399.3L954.1 434.2L954.4 391.9L954.8 450.0L955.1 394.8L955.4 447.8L955.7 395.4L956.0 446.9L956.4 396.7L956.7 448.4L957.0 398.2L957.3 445.8L957.6 407.0L958.0 442.0L958.3 409.0L958.6 427.3L958.9 407.0L959.2 426.2L959.6 409.8L959.9 437.0L960.2 410.4L960.5 433.9L960.8 405.4L961.2 434.8L961.5 407.4L961.8 442.2L962.1 404.0L962.4 450.2L962.8 391.4L963.1 460.6L963.4 377.9L963.7 439.2L964.0 361.5L964.4 440.6L964.7 353.7L965.0 475.5L965.3 367.7L965.6 477.6L966.0 356.2L966.3 489.0L966.6 307.6L966.9 493.1L967.2 292.8L967.6 483.3L967.9 301.0L968.2 445.6L968.5 303.1L968.8 447.2L969.2 293.3L969.5 454.6L969.8 326.2L970.1 519.4L970.4 263.3L970.8 517.8L971.1 272.4L971.4 518.8L971.7 283.2L972.0 530.8L972.4 286.9L972.7 559.2L973.0 285.9L973.3 486.3L973.6 321.8L974.0 478.4L974.3 327.0L974.6 554.0L974.9 298.3L975.2 569.3L975.6 261.2L975.9 611.7L976.2 247.4L976.5 638.0L976.8 261.6L977.2 614.2L977.5 266.6L977.8 577.1L978.1 327.9L978.4 479.9L978.8 287.5L979.1 477.4L979.4 285.0L979.7 562.5L980.0 271.4L980.4 549.9L980.7 277.3L981.0 532.6L981.3 302.6L981.6 530.0L982.0 314.5L982.3 531.0L982.6 352.1L982.9 536.3L983.2 346.1L983.6 464.3L983.9 300.2L984.2 459.7L984.5 304.1L984.8 459.5L985.2 303.2L985.5 517.4L985.8 289.8L986.1 535.8L986.4 279.2L986.8 543.7L987.1 290.0L987.4 550.2L987.7 341.4L988.0 562.8L988.4 312.7L988.7 552.8L989.0 309.6L989.3 471.1L989.6 298.2L990.0 473.0L990.3 288.9L990.6 467.1L990.9 301.8L991.2 525.1L991.6 350.4L991.9 525.2L992.2 352.2L992.5 542.0L992.8 311.3L993.2 552.9L993.5 300.7L993.8 532.9L994.1 304.8L994.4 521.6L994.8 314.3L995.1 461.4L995.4 320.6L995.7 463.9L996.0 318.4L996.4 466.1L996.7 343.1L997.0 514.5L997.3 347.7L997.6 502.6L998.0 330.5L998.3 499.8L998.6 337.9L998.9 503.7L999.2 332.4L999.6 517.0L999.9 313.7L1000.2 513.8L1000.5 312.4L1000.8 455.2L1001.2 356.7L1001.5 455.0L1001.8 354.5L1002.1 455.4L1002.4 315.7L1002.8 514.5L1003.1 307.1L1003.4 513.4L1003.7 306.2L1004.0 502.5L1004.4 317.6L1004.7 520.3L1005.0 325.5L1005.3 528.6L1005.6 355.3L1006.0 519.2L1006.3 305.2L1006.6 461.5L1006.9 297.7L1007.2 454.3L1007.6 309.6L1007.9 495.2L1008.2 313.8L1008.5 497.1L1008.8 300.2L1009.2 509.8L1009.5 291.1L1009.8 509.4L1010.1 302.4L1010.4 491.7L1010.8 319.9L1011.1 447.4L1011.4 333.0L1011.7 449.1L1012.0 336.6L1012.4 496.7L1012.7 334.6L1013.0 494.3L1013.3 359.8L1013.6 479.6L1014.0 368.2L1014.3 472.9L1014.6 355.5L1014.9 469.3L1015.2 360.7L1015.6 439.7L1015.9 362.7L1016.2 437.8L1016.5 373.0L1016.8 430.7L1017.2 391.5L1017.5 434.8L1017.8 408.6L1018.1 425.6L1018.4 409.8L1018.8 430.0L1019.1 408.8L1019.4 424.8L1019.7 406.3L1020.0 428.7L1020.4 411.8L1020.7 425.3L1021.0 410.7L1021.3 427.5L1021.6 411.9L1022.0 429.0L1022.3 413.9L1022.6 424.7L1022.9 412.1L1023.2 424.3L1023.6 408.2L1023.9 430.7L1024.2 410.0L1024.5 425.7L1024.8 413.4L1025.2 429.7L1025.5 412.6L1025.8 425.6L1026.1 413.2L1026.4 432.2L1026.8 411.9L1027.1 432.1L1027.4 411.5L1027.7 425.9L1028.0 413.2L1028.4 431.8L1028.7 409.8L1029.0 427.0L1029.3 401.2L1029.6 436.3L1030.0 406.8L1030.3 428.3L1030.6 401.7L1030.9 432.4L1031.2 393.2L1031.6 430.3L1031.9 402.3L1032.2 445.3L1032.5 401.5L1032.8 435.6L1033.2 398.2L1033.5 442.4L1033.8 401.6L1034.1 449.6L1034.4 382.0L1034.8 438.8L1035.1 378.3L1035.4 450.9L1035.7 382.3L1036.0 451.6L1036.4 387.3L1036.7 451.0L1037.0 388.5L1037.3 444.2L1037.6 402.5L1038.0 447.5L1038.3 401.0L1038.6 469.1L1038.9 388.2L1039.2 475.4L1039.6 394.0L1039.9 468.0L1040.2 401.5L1040.5 456.1L1040.8 395.7L1041.2 437.9L1041.5 404.8L1041.8 438.7L1042.1 407.4L1042.4 433.7L1042.8 396.2L1043.1 432.6L1043.4 399.2L1043.7 439.0L1044.0 406.6L1044.4 441.9L1044.7 409.2L1045.0 436.8L1045.3 406.4L1045.6 429.6L1046.0 410.7L1046.3 433.1L1046.6 407.3L1046.9 424.8L1047.2 413.8L1047.6 426.2L1047.9 410.3L1048.2 424.6L1048.5 413.0L1048.8 428.0L1049.2 410.0L1049.5 431.2L1049.8 408.4L1050.1 425.8L1050.4 414.1L1050.8 427.3L1051.1 410.6L1051.4 425.4L1051.7 409.6L1052.0 425.5L1052.4 412.1L1052.7 424.1L1053.0 414.0L1053.3 427.2L1053.6 409.9L1054.0 431.0L1054.3 405.5L1054.6 434.8L1054.9 405.0L1055.2 437.2L1055.6 402.3L1055.9 437.5L1056.2 404.0L1056.5 436.8L1056.8 402.3L1057.2 445.2L1057.5 401.9L1057.8 443.2L1058.1 384.6L1058.4 445.4L1058.8 378.8L1059.1 443.5L1059.4 383.2L1059.7 455.9L1060.0 391.7L1060.4 460.2L1060.7 398.0L1061.0 456.4L1061.3 399.7L1061.6 445.6L1062.0 393.8L1062.3 437.0L1062.6 400.7L1062.9 443.6L1063.2 407.1L1063.6 452.2L1063.9 397.3L1064.2 434.4L1064.5 391.7L1064.8 452.6L1065.2 391.1L1065.5 443.3L1065.8 393.4L1066.1 438.6L1066.4 406.4L1066.8 437.7L1067.1 391.6L1067.4 441.9L1067.7 389.2L1068.0 450.0L1068.4 391.2L1068.7 443.2L1069.0 405.4L1069.3 435.6L1069.6 400.1L1070.0 440.9L1070.3 392.3L1070.6 436.6L1070.9 405.0L1071.2 450.4L1071.6 395.6L1071.9 458.0L1072.2 390.6L1072.5 461.5L1072.8 400.4L1073.2 459.8L1073.5 398.5L1073.8 456.6L1074.1 404.1L1074.4 453.3L1074.8 386.1L1075.1 449.7L1075.4 402.0L1075.7 436.0L1076.0 389.1L1076.4 435.1L1076.7 389.4L1077.0 435.3L1077.3 399.3L1077.6 435.5L1078.0 380.7L1078.3 445.6L1078.6 379.6L1078.9 451.2L1079.2 386.6L1079.6 455.6L1079.9 390.6L1080.2 443.3L1080.5 386.7L1080.8 448.2L1081.2 368.7L1081.5 438.9L1081.8 363.7L1082.1 442.5L1082.4 367.0L1082.8 451.0L1083.1 396.8L1083.4 460.2L1083.7 394.4L1084.0 462.8L1084.4 389.5L1084.7 460.0L1085.0 388.8L1085.3 454.4L1085.6 387.9L1086.0 439.0L1086.3 382.7L1086.6 441.1L1086.9 386.5L1087.2 438.7L1087.6 398.8L1087.9 462.1L1088.2 398.8L1088.5 440.4L1088.8 396.7L1089.2 436.2L1089.5 389.5L1089.8 432.9L1090.1 404.5L1090.4 433.6L1090.8 407.2L1091.1 432.4L1091.4 407.5L1091.7 430.2L1092.0 405.4L1092.4 429.1L1092.7 407.1L1093.0 426.6L1093.3 407.7L1093.6 425.5L1094.0 405.5L1094.3 427.2L1094.6 401.3L1094.9 434.5L1095.2 394.0L1095.6 440.8L1095.9 404.3L1096.2 447.9L1096.5 392.9L1096.8 446.8L1097.2 399.4L1097.5 437.6L1097.8 378.9L1098.1 437.9L1098.4 385.9L1098.8 450.8L1099.1 367.4L1099.4 444.7L1099.7 374.3L1100.0 464.9L1100.4 367.7L1100.7 453.6L1101.0 377.8L1101.3 464.8L1101.6 362.6L1102.0 442.8L1102.3 382.5L1102.6 441.7L1102.9 348.9L1103.2 442.9L1103.6 340.2L1103.9 470.5L1104.2 347.2L1104.5 454.8L1104.8 369.5L1105.2 455.6L1105.5 358.5L1105.8 459.7L1106.1 373.4L1106.4 443.7L1106.8 369.7L1107.1 471.0L1107.4 371.5L1107.7 475.7L1108.0 383.7L1108.4 470.5L1108.7 375.5L1109.0 444.0L1109.3 385.6L1109.6 441.6L1110.0 393.1L1110.3 447.5L1110.6 391.2L1110.9 440.0L1111.2 392.6L1111.6 439.7L1111.9 394.5L1112.2 459.2L1112.5 396.5L1112.8 459.0L1113.2 376.2L1113.5 439.9L1113.8 370.9L1114.1 461.9L1114.4 388.3L1114.8 440.5L1115.1 381.3L1115.4 449.7L1115.7 380.6L1116.0 447.2L1116.4 366.0L1116.7 442.0L1117.0 360.9L1117.3 448.2L1117.6 367.6L1118.0 445.6L1118.3 374.8L1118.6 466.6L1118.9 393.6L1119.2 470.6L1119.6 382.4L1119.9 464.4L1120.2 382.4L1120.5 444.5L1120.8 389.7L1121.2 446.7L1121.5 381.8L1121.8 437.6L1122.1 384.8L1122.4 449.5L1122.8 401.9L1123.1 449.3L1123.4 401.1L1123.7 437.4L1124.0 395.6L1124.4 435.5L1124.7 400.1L1125.0 435.6L1125.3 410.7L1125.6 434.6L1126.0 412.8L1126.3 435.4L1126.6 413.3L1126.9 430.7L1127.2 407.3L1127.6 428.9L1127.9 413.9L1128.2 424.3L1128.5 409.3L1128.8 427.6L1129.2 410.0L1129.5 424.8L1129.8 412.0L1130.1 423.9L1130.4 414.2L1130.8 424.1L1131.1 412.5L1131.4 423.3L1131.7 409.0L1132.0 422.9L1132.4 414.3L1132.7 428.3L1133.0 413.0L1133.3 427.7L1133.6 411.0L1134.0 423.8L1134.3 414.1L1134.6 426.8L1134.9 413.8L1135.2 423.1L1135.6 412.9L1135.9 427.0L1136.2 413.2L1136.5 423.1L1136.8 411.9L1137.2 424.3L1137.5 409.8L1137.8 422.8L1138.1 414.8L1138.4 427.5L1138.8 411.5L1139.1 423.2L1139.4 413.3L1139.7 427.5L1140.0 414.4L1140.4 425.2L1140.7 411.5L1141.0 422.8L1141.3 411.1L1141.6 423.6L1142.0 410.8L1142.3 424.8L1142.6 412.0L1142.9 427.5L1143.2 414.5L1143.6 428.2L1143.9 413.5L1144.2 424.1L1144.5 410.6L1144.8 424.9L1145.2 413.9L1145.5 425.9L1145.8 411.1L1146.1 423.2L1146.4 413.2L1146.8 424.5L1147.1 411.8L1147.4 426.5L1147.7 410.5L1148.0 428.9L1148.4 412.2L1148.7 423.6L1149.0 412.1L1149.3 427.0L1149.6 401.6L1150.0 424.1L1150.3 399.7L1150.6 425.4L1150.9 398.1L1151.2 429.0L1151.6 403.9L1151.9 428.2L1152.2 410.3L1152.5 423.7L1152.8 411.1L1153.2 426.5L1153.5 412.5L1153.8 425.9L1154.1 411.5L1154.4 423.6L1154.8 409.7L1155.1 429.7L1155.4 414.7L1155.7 423.4L1156.0 411.9L1156.4 429.6L1156.7 410.7L1157.0 423.4L1157.3 409.9L1157.6 428.5L1158.0 411.5L1158.3 423.7L1158.6 411.3L1158.9 425.4L1159.2 410.2L1159.6 423.8L1159.9 413.9L1160.2 423.1L1160.5 413.0L1160.8 424.2L1161.2 414.2L1161.5 426.9L1161.8 413.6L1162.1 427.4L1162.4 414.3L1162.8 425.0L1163.1 414.0L1163.4 425.9L1163.7 411.4L1164.0 425.7L1164.4 414.1L1164.7 428.0L1165.0 414.0L1165.3 425.6L1165.6 412.2L1166.0 422.8L1166.3 413.5L1166.6 424.4L1166.9 414.3L1167.2 424.6L1167.6 414.6L1167.9 424.3L1168.2 410.3L1168.5 427.0L1168.8 412.7L1169.2 423.0L1169.5 414.4L1169.8 426.9L1170.1 414.3L1170.4 427.5L1170.8 414.2L1171.1 426.0L1171.4 410.7L1171.7 426.4L1172.0 411.9L1172.4 426.6L1172.7 414.4L1173.0 423.9L1173.3 414.7L1173.6 423.6L1174.0 412.4L1174.3 423.2L1174.6 414.5L1174.9 425.4L1175.2 414.3L1175.6 424.8L1175.9 414.9L1176.2 424.9L1176.5 414.9L1176.8 425.2L1177.2 412.8L1177.5 424.4L1177.8 414.3L1178.1 421.7L1178.4 413.0L1178.8 421.5L1179.1 415.4L1179.4 421.3L1179.7 413.3L1180.0 422.8" stroke="#0072bd" stroke-width="0.800"/>
<path d="M861.0 417.9L861.3 419.5L861.6 418.1L862.0 419.4L862.3 418.2L862.6 419.0L862.9 417.9L863.2 419.0L863.6 417.9L863.9 419.1L864.2 417.8L864.5 419.7L864.8 417.7L865.2 419.6L865.5 417.8L865.8 419.6L866.1 418.1L866.4 419.6L866.8 418.1L867.1 419.7L867.4 416.5L867.7 421.2L868.0 407.1L868.4 423.1L868.7 364.0L869.0 428.0L869.3 363.1L869.6 433.5L870.0 357.8L870.3 465.6L870.6 371.1L870.9 478.3L871.2 359.5L871.6 481.2L871.9 314.4L872.2 483.8L872.5 302.3L872.8 491.1L873.2 269.3L873.5 453.7L873.8 222.6L874.1 461.2L874.4 193.3L874.8 464.1L875.1 187.5L875.4 526.0L875.7 283.3L876.0 534.3L876.4 216.1L876.7 550.7L877.0 202.7L877.3 586.9L877.6 166.3L878.0 614.7L878.3 150.0L878.6 591.3L878.9 168.2L879.2 475.3L879.6 204.8L879.9 546.8L880.2 280.9L880.5 557.7L880.8 269.9L881.2 554.9L881.5 175.1L881.8 528.9L882.1 155.2L882.4 514.8L882.8 177.2L883.1 458.3L883.4 210.4L883.7 463.8L884.0 200.5L884.4 463.6L884.7 264.0L885.0 507.2L885.3 274.3L885.6 501.0L886.0 216.9L886.3 501.8L886.6 221.1L886.9 511.9L887.2 210.6L887.6 519.9L887.9 204.1L888.2 455.3L888.5 235.3L888.8 453.0L889.2 313.8L889.5 453.6L889.8 319.4L890.1 508.7L890.4 269.5L890.8 518.9L891.1 264.2L891.4 509.5L891.7 278.8L892.0 502.9L892.4 298.1L892.7 505.1L893.0 308.3L893.3 458.0L893.6 347.7L894.0 462.9L894.3 303.8L894.6 458.3L894.9 311.7L895.2 498.9L895.6 327.9L895.9 497.9L896.2 333.4L896.5 504.5L896.8 332.5L897.2 516.5L897.5 357.2L897.8 519.9L898.1 358.3L898.4 527.6L898.8 340.7L899.1 516.5L899.4 348.6L899.7 452.0L900.0 351.7L900.4 453.7L900.7 350.5L901.0 494.7L901.3 353.2L901.6 481.3L902.0 382.6L902.3 478.1L902.6 370.0L902.9 477.1L903.2 374.7L903.6 480.5L903.9 378.1L904.2 478.9L904.5 381.9L904.8 439.5L905.2 389.9L905.5 436.3L905.8 401.6L906.1 433.5L906.4 393.9L906.8 451.8L907.1 394.3L907.4 451.3L907.7 395.9L908.0 448.6L908.4 401.6L908.7 446.6L909.0 405.9L909.3 445.3L909.6 408.6L910.0 447.2L910.3 400.9L910.6 431.2L910.9 396.3L911.2 429.5L911.6 394.8L911.9 430.2L912.2 395.5L912.5 448.8L912.8 390.9L913.2 453.4L913.5 394.6L913.8 462.0L914.1 387.8L914.4 462.1L914.8 366.2L915.1 461.2L915.4 362.7L915.7 476.2L916.0 347.4L916.4 484.7L916.7 335.0L917.0 481.1L917.3 340.4L917.6 474.4L918.0 369.0L918.3 465.4L918.6 351.3L918.9 463.8L919.2 355.1L919.6 467.5L919.9 358.0L920.2 477.4L920.5 357.2L920.8 443.7L921.2 357.6L921.5 441.0L921.8 382.3L922.1 440.5L922.4 383.3L922.8 472.8L923.1 366.9L923.4 481.1L923.7 368.0L924.0 485.8L924.4 367.7L924.7 478.8L925.0 372.3L925.3 461.6L925.6 374.6L926.0 437.1L926.3 373.7L926.6 439.3L926.9 387.3L927.2 468.3L927.6 370.7L927.9 459.8L928.2 376.8L928.5 455.1L928.8 379.7L929.2 452.3L929.5 380.0L929.8 453.7L930.1 378.1L930.4 433.8L930.8 374.1L931.1 432.0L931.4 392.1L931.7 431.0L932.0 395.9L932.4 449.5L932.7 384.5L933.0 453.5L933.3 382.9L933.6 457.7L934.0 378.4L934.3 452.8L934.6 376.1L934.9 449.1L935.2 377.7L935.6 431.9L935.9 391.2L936.2 432.4L936.5 371.3L936.8 433.8L937.2 366.6L937.5 453.8L937.8 372.3L938.1 450.5L938.4 381.5L938.8 449.6L939.1 383.6L939.4 449.7L939.7 386.2L940.0 454.7L940.4 397.0L940.7 455.6L941.0 397.0L941.3 432.3L941.6 389.5L942.0 431.7L942.3 389.7L942.6 432.6L942.9 389.9L943.2 458.6L943.6 387.6L943.9 459.4L944.2 383.8L944.5 453.5L944.8 385.1L945.2 452.0L945.5 396.9L945.8 452.3L946.1 376.2L946.4 456.4L946.8 371.9L947.1 435.5L947.4 375.5L947.7 433.6L948.0 381.7L948.4 433.2L948.7 385.0L949.0 455.5L949.3 396.3L949.6 461.2L950.0 395.6L950.3 463.3L950.6 380.5L950.9 456.3L951.2 381.6L951.6 464.8L951.9 385.2L952.2 467.6L952.5 388.0L952.8 462.2L953.2 389.5L953.5 436.6L953.8 399.3L954.1 434.2L954.4 391.9L954.8 450.0L955.1 394.8L955.4 447.8L955.7 395.4L956.0 446.9L956.4 396.7L956.7 448.4L957.0 398.2L957.3 445.8L957.6 407.0L958.0 442.0L958.3 409.0L958.6 427.3L958.9 407.0L959.2 426.2L959.6 409.8L959.9 437.0L960.2 410.4L960.5 433.9L960.8 405.4L961.2 434.8L961.5 407.4L961.8 442.2L962.1 404.0L962.4 450.2L962.8 391.4L963.1 460.6L963.4 377.9L963.7 439.2L964.0 361.5L964.4 440.6L964.7 353.7L965.0 475.5L965.3 367.7L965.6 477.6L966.0 356.2L966.3 489.0L966.6 307.6L966.9 493.1L967.2 292.8L967.6 483.3L967.9 301.0L968.2 445.6L968.5 303.1L968.8 447.2L969.2 293.3L969.5 454.6L969.8 326.2L970.1 519.4L970.4 263.3L970.8 517.8L971.1 272.4L971.4 518.8L971.7 283.2L972.0 530.8L972.4 286.9L972.7 559.2L973.0 285.9L973.3 486.3L973.6 321.8L974.0 478.4L974.3 327.0L974.6 554.0L974.9 298.3L975.2 569.3L975.6 261.2L975.9 611.7L976.2 247.4L976.5 638.0L976.8 261.6L977.2 614.2L977.5 266.6L977.8 577.1L978.1 327.9L978.4 479.9L978.8 287.5L979.1 477.4L979.4 285.0L979.7 562.5L980.0 271.4L980.4 549.9L980.7 277.3L981.0 532.6L981.3 302.6L981.6 530.0L982.0 314.5L982.3 531.0L982.6 352.1L982.9 536.3L983.2 346.1L983.6 464.3L983.9 300.2L984.2 459.7L984.5 304.1L984.8 459.5L985.2 303.2L985.5 517.4L985.8 289.8L986.1 535.8L986.4 279.2L986.8 543.7L987.1 290.0L987.4 550.2L987.7 341.4L988.0 562.8L988.4 312.7L988.7 552.8L989.0 309.6L989.3 471.1L989.6 298.2L990.0 473.0L990.3 288.9L990.6 467.1L990.9 301.8L991.2 525.1L991.6 350.4L991.9 525.2L992.2 352.2L992.5 542.0L992.8 311.3L993.2 552.9L993.5 300.7L993.8 532.9L994.1 304.8L994.4 521.6L994.8 314.3L995.1 461.4L995.4 320.6L995.7 463.9L996.0 318.4L996.4 466.1L996.7 343.1L997.0 514.5L997.3 347.7L997.6 502.6L998.0 330.5L998.3 499.8L998.6 337.9L998.9 503.7L999.2 332.4L999.6 517.0L999.9 313.7L1000.2 513.8L1000.5 312.4L1000.8 455.2L1001.2 356.7L1001.5 455.0L1001.8 354.5L1002.1 455.4L1002.4 315.7L1002.8 514.5L1003.1 307.1L1003.4 513.4L1003.7 306.2L1004.0 502.5L1004.4 317.6L1004.7 520.3L1005.0 325.5L1005.3 528.6L1005.6 355.3L1006.0 519.2L1006.3 305.2L1006.6 461.5L1006.9 297.7L1007.2 454.3L1007.6 309.6L1007.9 495.2L1008.2 313.8L1008.5 497.1L1008.8 300.2L1009.2 509.8L1009.5 291.1L1009.8 509.4L1010.1 302.4L1010.4 491.7L1010.8 319.9L1011.1 447.4L1011.4 333.0L1011.7 449.1L1012.0 336.6L1012.4 496.7L1012.7 334.6L1013.0 494.3L1013.3 359.8L1013.6 479.6L1014.0 368.2L1014.3 472.9L1014.6 355.5L1014.9 469.3L1015.2 360.7L1015.6 439.7L1015.9 362.7L1016.2 437.8L1016.5 373.0L1016.8 430.7L1017.2 391.5L1017.5 434.8L1017.8 408.6L1018.1 425.6L1018.4 409.8L1018.8 430.0L1019.1 408.8L1019.4 424.8L1019.7 406.3L1020.0 428.7L1020.4 411.8L1020.7 425.3L1021.0 410.7L1021.3 427.5L1021.6 411.9L1022.0 429.0L1022.3 413.9L1022.6 424.7L1022.9 412.1L1023.2 424.3L1023.6 408.2L1023.9 430.7L1024.2 410.0L1024.5 425.7L1024.8 413.4L1025.2 429.7L1025.5 412.6L1025.8 425.6L1026.1 413.2L1026.4 432.2L1026.8 411.9L1027.1 432.1L1027.4 411.5L1027.7 425.9L1028.0 413.2L1028.4 431.8L1028.7 409.8L1029.0 427.0L1029.3 401.2L1029.6 436.3L1030.0 406.8L1030.3 428.3L1030.6 401.7L1030.9 432.4L1031.2 393.2L1031.6 430.3L1031.9 402.3L1032.2 445.3L1032.5 401.5L1032.8 435.6L1033.2 398.2L1033.5 442.4L1033.8 401.6L1034.1 449.6L1034.4 382.0L1034.8 438.8L1035.1 378.3L1035.4 450.9L1035.7 382.3L1036.0 451.6L1036.4 387.3L1036.7 451.0L1037.0 388.5L1037.3 444.2L1037.6 402.5L1038.0 447.5L1038.3 401.0L1038.6 469.1L1038.9 388.2L1039.2 475.4L1039.6 394.0L1039.9 468.0L1040.2 401.5L1040.5 456.1L1040.8 395.7L1041.2 437.9L1041.5 404.8L1041.8 438.7L1042.1 407.4L1042.4 433.7L1042.8 396.2L1043.1 432.6L1043.4 399.2L1043.7 439.0L1044.0 406.6L1044.4 441.9L1044.7 409.2L1045.0 436.8L1045.3 406.4L1045.6 429.6L1046.0 410.7L1046.3 433.1L1046.6 407.3L1046.9 424.8L1047.2 413.8L1047.6 426.2L1047.9 410.3L1048.2 424.6L1048.5 413.0L1048.8 428.0L1049.2 410.0L1049.5 431.2L1049.8 408.4L1050.1 425.8L1050.4 414.1L1050.8 427.3L1051.1 410.6L1051.4 425.4L1051.7 409.6L1052.0 425.5L1052.4 412.1L1052.7 424.1L1053.0 414.0L1053.3 427.2L1053.6 409.9L1054.0 431.0L1054.3 405.5L1054.6 434.8L1054.9 405.0L1055.2 437.2L1055.6 402.3L1055.9 437.5L1056.2 404.0L1056.5 436.8L1056.8 402.3L1057.2 445.2L1057.5 401.9L1057.8 443.2L1058.1 384.6L1058.4 445.4L1058.8 378.8L1059.1 443.5L1059.4 383.2L1059.7 455.9L1060.0 391.7L1060.4 460.2L1060.7 398.0L1061.0 456.4L1061.3 399.7L1061.6 445.6L1062.0 393.8L1062.3 437.0L1062.6 400.7L1062.9 443.6L1063.2 407.1L1063.6 452.2L1063.9 397.3L1064.2 434.4L1064.5 391.7L1064.8 452.6L1065.2 391.1L1065.5 443.3L1065.8 393.4L1066.1 438.6L1066.4 406.4L1066.8 437.7L1067.1 391.6L1067.4 441.9L1067.7 389.2L1068.0 450.0L1068.4 391.2L1068.7 443.2L1069.0 405.4L1069.3 435.6L1069.6 400.1L1070.0 440.9L1070.3 392.3L1070.6 436.6L1070.9 405.0L1071.2 450.4L1071.6 395.6L1071.9 458.0L1072.2 390.6L1072.5 461.5L1072.8 400.4L1073.2 459.8L1073.5 398.5L1073.8 456.6L1074.1 404.1L1074.4 453.3L1074.8 386.1L1075.1 449.7L1075.4 402.0L1075.7 436.0L1076.0 389.1L1076.4 435.1L1076.7 389.4L1077.0 435.3L1077.3 399.3L1077.6 435.5L1078.0 380.7L1078.3 445.6L1078.6 379.6L1078.9 451.2L1079.2 386.6L1079.6 455.6L1079.9 390.6L1080.2 443.3L1080.5 386.7L1080.8 448.2L1081.2 368.7L1081.5 438.9L1081.8 363.7L1082.1 442.5L1082.4 367.0L1082.8 451.0L1083.1 396.8L1083.4 460.2L1083.7 394.4L1084.0 462.8L1084.4 389.5L1084.7 460.0L1085.0 388.8L1085.3 454.4L1085.6 387.9L1086.0 439.0L1086.3 382.7L1086.6 441.1L1086.9 386.5L1087.2 438.7L1087.6 398.8L1087.9 462.1L1088.2 398.8L1088.5 440.4L1088.8 396.7L1089.2 436.2L1089.5 389.5L1089.8 432.9L1090.1 404.5L1090.4 433.6L1090.8 407.2L1091.1 432.4L1091.4 407.5L1091.7 430.2L1092.0 405.4L1092.4 429.1L1092.7 407.1L1093.0 426.6L1093.3 407.7L1093.6 425.5L1094.0 405.5L1094.3 427.2L1094.6 401.3L1094.9 434.5L1095.2 394.0L1095.6 440.8L1095.9 404.3L1096.2 447.9L1096.5 392.9L1096.8 446.8L1097.2 399.4L1097.5 437.6L1097.8 378.9L1098.1 437.9L1098.4 385.9L1098.8 450.8L1099.1 367.4L1099.4 444.7L1099.7 374.3L1100.0 464.9L1100.4 367.7L1100.7 453.6L1101.0 377.8L1101.3 464.8L1101.6 362.6L1102.0 442.8L1102.3 382.5L1102.6 441.7L1102.9 348.9L1103.2 442.9L1103.6 340.2L1103.9 470.5L1104.2 347.2L1104.5 454.8L1104.8 369.5L1105.2 455.6L1105.5 358.5L1105.8 459.7L1106.1 373.4L1106.4 443.7L1106.8 369.7L1107.1 471.0L1107.4 371.5L1107.7 475.7L1108.0 383.7L1108.4 470.5L1108.7 375.5L1109.0 444.0L1109.3 385.6L1109.6 441.6L1110.0 393.1L1110.3 447.5L1110.6 391.2L1110.9 440.0L1111.2 392.6L1111.6 439.7L1111.9 394.5L1112.2 459.2L1112.5 396.5L1112.8 459.0L1113.2 376.2L1113.5 439.9L1113.8 370.9L1114.1 461.9L1114.4 388.3L1114.8 440.5L1115.1 381.3L1115.4 449.7L1115.7 380.6L1116.0 447.2L1116.4 366.0L1116.7 442.0L1117.0 360.9L1117.3 448.2L1117.6 367.6L1118.0 445.6L1118.3 374.8L1118.6 466.6L1118.9 393.6L1119.2 470.6L1119.6 382.4L1119.9 464.4L1120.2 382.4L1120.5 444.5L1120.8 389.7L1121.2 446.7L1121.5 381.8L1121.8 437.6L1122.1 384.8L1122.4 449.5L1122.8 401.9L1123.1 449.3L1123.4 401.1L1123.7 437.4L1124.0 395.6L1124.4 435.5L1124.7 400.1L1125.0 435.6L1125.3 410.7L1125.6 434.6L1126.0 412.8L1126.3 435.4L1126.6 413.3L1126.9 430.7L1127.2 407.3L1127.6 428.9L1127.9 413.9L1128.2 424.3L1128.5 409.3L1128.8 427.6L1129.2 410.0L1129.5 424.8L1129.8 412.0L1130.1 423.9L1130.4 414.2L1130.8 424.1L1131.1 412.5L1131.4 423.3L1131.7 409.0L1132.0 422.9L1132.4 414.3L1132.7 428.3L1133.0 413.0L1133.3 427.7L1133.6 411.0L1134.0 423.8L1134.3 414.1L1134.6 426.8L1134.9 413.8L1135.2 423.1L1135.6 412.9L1135.9 427.0L1136.2 413.2L1136.5 423.1L1136.8 411.9L1137.2 424.3L1137.5 409.8L1137.8 422.8L1138.1 414.8L1138.4 427.5L1138.8 411.5L1139.1 423.2L1139.4 413.3L1139.7 427.5L1140.0 414.4L1140.4 425.2L1140.7 411.5L1141.0 422.8L1141.3 411.1L1141.6 423.6L1142.0 410.8L1142.3 424.8L1142.6 412.0L1142.9 427.5L1143.2 414.5L1143.6 428.2L1143.9 413.5L1144.2 424.1L1144.5 410.6L1144.8 424.9L1145.2 413.9L1145.5 425.9L1145.8 411.1L1146.1 423.2L1146.4 413.2L1146.8 424.5L1147.1 411.8L1147.4 426.5L1147.7 410.5L1148.0 428.9L1148.4 412.2L1148.7 423.6L1149.0 412.1L1149.3 427.0L1149.6 401.6L1150.0 424.1L1150.3 399.7L1150.6 425.4L1150.9 398.1L1151.2 429.0L1151.6 403.9L1151.9 428.2L1152.2 410.3L1152.5 423.7L1152.8 411.1L1153.2 426.5L1153.5 412.5L1153.8 425.9L1154.1 411.5L1154.4 423.6L1154.8 409.7L1155.1 429.7L1155.4 414.7L1155.7 423.4L1156.0 411.9L1156.4 429.6L1156.7 410.7L1157.0 423.4L1157.3 409.9L1157.6 428.5L1158.0 411.5L1158.3 423.7L1158.6 411.3L1158.9 425.4L1159.2 410.2L1159.6 423.8L1159.9 413.9L1160.2 423.1L1160.5 413.0L1160.8 424.2L1161.2 414.2L1161.5 426.9L1161.8 413.6L1162.1 427.4L1162.4 414.3L1162.8 425.0L1163.1 414.0L1163.4 425.9L1163.7 411.4L1164.0 425.7L1164.4 414.1L1164.7 428.0L1165.0 414.0L1165.3 425.6L1165.6 412.2L1166.0 422.8L1166.3 413.5L1166.6 424.4L1166.9 414.3L1167.2 424.6L1167.6 414.6L1167.9 424.3L1168.2 410.3L1168.5 427.0L1168.8 412.7L1169.2 423.0L1169.5 414.4L1169.8 426.9L1170.1 414.3L1170.4 427.5L1170.8 414.2L1171.1 426.0L1171.4 410.7L1171.7 426.4L1172.0 411.9L1172.4 426.6L1172.7 414.4L1173.0 423.9L1173.3 414.7L1173.6 423.6L1174.0 412.4L1174.3 423.2L1174.6 414.5L1174.9 425.4L1175.2 414.3L1175.6 424.8L1175.9 414.9L1176.2 424.9L1176.5 414.9L1176.8 425.2L1177.2 412.8L1177.5 424.4L1177.8 414.3L1178.1 421.7L1178.4 413.0L1178.8 421.5L1179.1 415.4L1179.4 421.3L1179.7 413.3L1180.0 422.8" stroke="#d95319" stroke-width="1.600"/>
<path d="M861.0 418.7L861.3 418.7L861.6 418.7L862.0 418.7L862.3 418.7L862.6 418.7L862.9 418.7L863.2 418.7L863.6 418.7L863.9 418.7L864.2 418.7L864.5 418.7L864.8 418.7L865.2 418.7L865.5 418.7L865.8 418.7L866.1 418.7L866.4 418.7L866.8 418.7L867.1 418.7L867.4 418.7L867.7 418.7L868.0 414.2L868.4 420.4L868.7 378.9L869.0 425.5L869.3 377.8L869.6 429.8L870.0 373.5L870.3 453.9L870.6 382.6L870.9 464.0L871.2 372.4L871.6 467.5L871.9 333.6L872.2 471.8L872.5 319.9L872.8 480.1L873.2 290.1L873.5 448.9L873.8 248.4L874.1 455.8L874.4 214.4L874.8 459.0L875.1 201.2L875.4 514.8L875.7 292.7L876.0 520.6L876.4 230.4L876.7 535.4L877.0 216.6L877.3 570.5L877.6 182.5L878.0 596.3L878.3 161.0L878.6 572.3L878.9 183.4L879.2 468.2L879.6 217.3L879.9 530.7L880.2 288.1L880.5 540.6L880.8 276.7L881.2 539.7L881.5 190.0L881.8 517.7L882.1 177.6L882.4 505.0L882.8 196.4L883.1 454.8L883.4 222.1L883.7 459.7L884.0 214.2L884.4 458.4L884.7 274.5L885.0 496.9L885.3 281.9L885.6 491.5L886.0 226.9L886.3 491.6L886.6 230.6L886.9 501.9L887.2 223.2L887.6 509.5L887.9 227.0L888.2 450.6L888.5 259.6L888.8 447.8L889.2 329.3L889.5 447.9L889.8 334.8L890.1 495.1L890.4 293.4L890.8 504.3L891.1 289.4L891.4 494.1L891.7 300.6L892.0 487.0L892.4 315.4L892.7 489.2L893.0 323.6L893.3 451.0L893.6 358.0L894.0 454.6L894.3 322.8L894.6 450.8L894.9 331.3L895.2 485.4L895.6 344.8L895.9 485.4L896.2 348.5L896.5 490.0L896.8 348.0L897.2 499.2L897.5 368.4L897.8 501.7L898.1 368.6L898.4 507.2L898.8 353.8L899.1 498.1L899.4 361.1L899.7 445.7L900.0 364.6L900.4 447.5L900.7 364.4L901.0 481.4L901.3 366.8L901.6 469.2L902.0 390.0L902.3 466.7L902.6 379.8L902.9 466.0L903.2 384.6L903.6 466.3L903.9 389.7L904.2 461.3L904.5 394.6L904.8 432.4L905.2 401.9L905.5 429.0L905.8 410.2L906.1 426.1L906.4 407.0L906.8 434.8L907.1 407.1L907.4 434.7L907.7 407.6L908.0 433.1L908.4 410.3L908.7 432.0L909.0 412.5L909.3 431.2L909.6 413.8L910.0 432.3L910.3 409.6L910.6 425.2L910.9 405.5L911.2 425.2L911.6 402.4L911.9 426.6L912.2 401.1L912.5 441.3L912.8 395.5L913.2 447.8L913.5 397.9L913.8 457.0L914.1 391.9L914.4 457.3L914.8 372.5L915.1 456.4L915.4 368.8L915.7 470.4L916.0 354.4L916.4 479.5L916.7 342.5L917.0 475.7L917.3 348.1L917.6 469.1L918.0 374.6L918.3 461.4L918.6 359.1L918.9 459.9L919.2 361.9L919.6 462.8L919.9 363.8L920.2 471.6L920.5 362.4L920.8 441.3L921.2 362.4L921.5 438.7L921.8 385.1L922.1 438.3L922.4 385.8L922.8 467.5L923.1 370.7L923.4 475.2L923.7 373.3L924.0 479.5L924.4 373.9L924.7 473.0L925.0 377.5L925.3 458.1L925.6 378.9L926.0 435.7L926.3 377.4L926.6 437.6L926.9 389.9L927.2 464.0L927.6 374.6L927.9 456.1L928.2 380.3L928.5 451.9L928.8 383.3L929.2 449.1L929.5 383.5L929.8 450.4L930.1 381.7L930.4 432.6L930.8 378.2L931.1 430.8L931.4 394.6L931.7 429.9L932.0 397.7L932.4 446.9L932.7 386.8L933.0 450.4L933.3 385.4L933.6 453.9L934.0 381.9L934.3 449.6L934.6 380.1L934.9 446.4L935.2 381.1L935.6 430.5L935.9 393.8L936.2 431.0L936.5 376.5L936.8 432.4L937.2 371.8L937.5 450.6L937.8 376.6L938.1 448.1L938.4 385.3L938.8 447.5L939.1 387.6L939.4 446.9L939.7 389.9L940.0 450.4L940.4 399.2L940.7 450.9L941.0 399.2L941.3 430.7L941.6 392.8L942.0 430.3L942.3 392.7L942.6 431.4L942.9 392.4L943.2 455.4L943.6 390.3L943.9 455.2L944.2 387.2L944.5 449.6L944.8 388.7L945.2 448.3L945.5 399.3L945.8 448.3L946.1 381.1L946.4 451.8L946.8 377.3L947.1 433.7L947.4 380.4L947.7 432.1L948.0 385.8L948.4 431.5L948.7 388.2L949.0 451.6L949.3 398.3L949.6 457.4L950.0 398.0L950.3 459.3L950.6 385.0L950.9 452.7L951.2 385.9L951.6 460.4L951.9 389.0L952.2 462.6L952.5 391.4L952.8 458.0L953.2 392.1L953.5 435.2L953.8 401.0L954.1 432.9L954.4 394.4L954.8 446.7L955.1 397.4L955.4 443.8L955.7 399.8L956.0 441.3L956.4 402.3L956.7 440.8L957.0 404.5L957.3 437.2L957.6 411.3L958.0 433.1L958.3 413.3L958.6 423.4L958.9 413.1L959.2 422.4L959.6 414.4L959.9 427.4L960.2 414.6L960.5 425.8L960.8 412.1L961.2 426.3L961.5 413.1L961.8 430.0L962.1 411.4L962.4 433.9L962.8 404.7L963.1 440.2L963.4 394.4L963.7 430.8L964.0 378.9L964.4 433.8L964.7 367.4L965.0 463.5L965.3 375.8L965.6 468.3L966.0 364.5L966.3 478.4L966.6 320.3L966.9 482.5L967.2 306.3L967.6 476.1L967.9 310.9L968.2 443.2L968.5 309.3L968.8 444.7L969.2 299.5L969.5 451.6L969.8 331.8L970.1 511.8L970.4 272.9L970.8 510.1L971.1 282.9L971.4 509.7L971.7 292.3L972.0 521.0L972.4 292.7L972.7 547.3L973.0 292.1L973.3 480.4L973.6 328.5L974.0 473.9L974.3 333.8L974.6 543.2L974.9 305.3L975.2 555.5L975.6 268.5L975.9 595.1L976.2 254.8L976.5 619.8L976.8 268.0L977.2 597.9L977.5 273.0L977.8 563.2L978.1 332.1L978.4 474.0L978.8 295.0L979.1 472.0L979.4 294.3L979.7 550.9L980.0 281.8L980.4 539.7L980.7 286.7L981.0 523.3L981.3 309.3L981.6 521.8L982.0 320.3L982.3 523.3L982.6 357.1L982.9 528.2L983.2 352.0L983.6 460.8L983.9 308.4L984.2 455.9L984.5 312.2L984.8 455.9L985.2 312.4L985.5 509.9L985.8 299.5L986.1 526.7L986.4 288.1L986.8 532.0L987.1 299.1L987.4 536.0L987.7 346.9L988.0 548.1L988.4 318.8L988.7 540.4L989.0 316.5L989.3 465.7L989.6 306.1L990.0 467.1L990.3 296.2L990.6 462.3L990.9 309.2L991.2 515.8L991.6 354.7L991.9 515.3L992.2 355.1L992.5 530.1L992.8 315.6L993.2 541.3L993.5 307.1L993.8 523.7L994.1 312.0L994.4 512.7L994.8 320.2L995.1 457.5L995.4 325.5L995.7 460.4L996.0 323.8L996.4 463.1L996.7 347.5L997.0 509.1L997.3 351.4L997.6 498.3L998.0 335.0L998.3 494.1L998.6 342.8L998.9 495.6L999.2 337.2L999.6 506.9L999.9 318.2L1000.2 505.0L1000.5 316.0L1000.8 452.1L1001.2 358.8L1001.5 451.5L1001.8 357.9L1002.1 451.4L1002.4 323.0L1002.8 503.8L1003.1 314.3L1003.4 504.1L1003.7 313.4L1004.0 496.9L1004.4 325.4L1004.7 514.1L1005.0 331.8L1005.3 520.2L1005.6 358.1L1006.0 511.3L1006.3 309.2L1006.6 458.1L1006.9 303.6L1007.2 451.2L1007.6 317.2L1007.9 488.5L1008.2 320.3L1008.5 490.2L1008.8 305.7L1009.2 500.9L1009.5 298.2L1009.8 500.4L1010.1 311.8L1010.4 484.6L1010.8 329.7L1011.1 444.1L1011.4 340.9L1011.7 445.6L1012.0 344.9L1012.4 487.0L1012.7 345.8L1013.0 482.1L1013.3 369.2L1013.6 468.7L1014.0 376.7L1014.3 462.8L1014.6 367.2L1014.9 458.3L1015.2 372.9L1015.6 434.8L1015.9 376.2L1016.2 433.3L1016.5 396.5L1016.8 424.6L1017.2 414.1L1017.5 421.4L1017.8 418.7L1018.1 418.7L1018.4 418.7L1018.8 418.7L1019.1 418.7L1019.4 418.7L1019.7 418.7L1020.0 418.7L1020.4 418.7L1020.7 418.7L1021.0 418.7L1021.3 418.7L1021.6 418.7L1022.0 418.7L1022.3 418.7L1022.6 418.7L1022.9 418.7L1023.2 418.7L1023.6 418.7L1023.9 418.7L1024.2 418.7L1024.5 418.7L1024.8 418.7L1025.2 418.7L1025.5 418.7L1025.8 418.7L1026.1 418.7L1026.4 418.7L1026.8 418.7L1027.1 418.7L1027.4 418.7L1027.7 418.7L1028.0 418.7L1028.4 418.7L1028.7 418.7L1029.0 418.7L1029.3 417.9L1029.6 420.2L1030.0 417.2L1030.3 424.2L1030.6 416.5L1030.9 426.7L1031.2 415.9L1031.6 428.5L1031.9 414.4L1032.2 425.1L1032.5 412.5L1032.8 425.5L1033.2 413.7L1033.5 428.3L1033.8 408.8L1034.1 431.6L1034.4 409.7L1034.8 432.7L1035.1 409.6L1035.4 427.4L1035.7 407.8L1036.0 436.5L1036.4 412.5L1036.7 434.1L1037.0 410.0L1037.3 437.2L1037.6 412.6L1038.0 433.3L1038.3 413.2L1038.6 453.3L1038.9 414.4L1039.2 455.8L1039.6 409.8L1039.9 451.6L1040.2 409.2L1040.5 433.4L1040.8 415.1L1041.2 430.8L1041.5 412.8L1041.8 442.6L1042.1 416.9L1042.4 429.2L1042.8 417.3L1043.1 425.6L1043.4 418.5L1043.7 419.2L1044.0 418.7L1044.4 418.7L1044.7 418.7L1045.0 418.7L1045.3 418.7L1045.6 418.7L1046.0 418.7L1046.3 418.7L1046.6 418.7L1046.9 418.7L1047.2 418.7L1047.6 418.7L1047.9 418.7L1048.2 418.7L1048.5 418.7L1048.8 418.7L1049.2 418.7L1049.5 418.7L1049.8 418.7L1050.1 418.7L1050.4 418.7L1050.8 418.7L1051.1 418.7L1051.4 418.7L1051.7 418.7L1052.0 418.7L1052.4 418.7L1052.7 418.7L1053.0 418.7L1053.3 418.7L1053.6 418.7L1054.0 418.7L1054.3 418.7L1054.6 418.7L1054.9 418.7L1055.2 418.7L1055.6 418.7L1055.9 418.7L1056.2 418.3L1056.5 419.5L1056.8 416.6L1057.2 422.2L1057.5 410.3L1057.8 424.8L1058.1 410.9L1058.4 430.8L1058.8 411.0L1059.1 431.3L1059.4 411.5L1059.7 427.6L1060.0 411.7L1060.4 432.1L1060.7 409.9L1061.0 429.6L1061.3 412.7L1061.6 430.5L1062.0 411.1L1062.3 425.2L1062.6 414.9L1062.9 431.9L1063.2 412.4L1063.6 429.1L1063.9 412.0L1064.2 424.0L1064.5 413.8L1064.8 423.3L1065.2 409.8L1065.5 425.5L1065.8 409.3L1066.1 427.9L1066.4 411.3L1066.8 425.3L1067.1 412.9L1067.4 425.9L1067.7 414.3L1068.0 430.0L1068.4 411.1L1068.7 425.4L1069.0 413.5L1069.3 424.2L1069.6 414.2L1070.0 427.6L1070.3 411.8L1070.6 427.1L1070.9 414.0L1071.2 430.9L1071.6 410.9L1071.9 425.4L1072.2 409.7L1072.5 434.3L1072.8 414.5L1073.2 436.1L1073.5 409.7L1073.8 432.6L1074.1 413.0L1074.4 429.4L1074.8 411.5L1075.1 426.1L1075.4 407.3L1075.7 424.8L1076.0 404.0L1076.4 431.0L1076.7 411.0L1077.0 434.2L1077.3 405.9L1077.6 426.6L1078.0 410.3L1078.3 432.2L1078.6 401.8L1078.9 434.5L1079.2 410.7L1079.6 433.1L1079.9 403.5L1080.2 429.6L1080.5 410.3L1080.8 432.4L1081.2 403.0L1081.5 428.0L1081.8 399.2L1082.1 430.3L1082.4 396.7L1082.8 427.3L1083.1 400.4L1083.4 435.5L1083.7 404.7L1084.0 428.2L1084.4 407.4L1084.7 436.9L1085.0 404.9L1085.3 435.2L1085.6 405.1L1086.0 428.0L1086.3 406.0L1086.6 426.7L1086.9 405.0L1087.2 434.5L1087.6 405.0L1087.9 429.6L1088.2 403.0L1088.5 433.1L1088.8 407.5L1089.2 435.4L1089.5 404.9L1089.8 426.7L1090.1 408.0L1090.4 424.3L1090.8 414.6L1091.1 423.9L1091.4 416.1L1091.7 421.2L1092.0 418.7L1092.4 418.7L1092.7 418.7L1093.0 418.7L1093.3 418.7L1093.6 418.7L1094.0 418.7L1094.3 418.7L1094.6 418.0L1094.9 419.6L1095.2 413.6L1095.6 422.8L1095.9 409.4L1096.2 428.5L1096.5 406.2L1096.8 435.7L1097.2 398.1L1097.5 446.6L1097.8 391.0L1098.1 436.4L1098.4 402.1L1098.8 449.5L1099.1 404.3L1099.4 443.6L1099.7 391.1L1100.0 446.1L1100.4 385.7L1100.7 434.1L1101.0 402.7L1101.3 455.4L1101.6 403.4L1102.0 443.7L1102.3 403.5L1102.6 443.5L1102.9 392.5L1103.2 442.4L1103.6 383.1L1103.9 460.7L1104.2 400.7L1104.5 461.7L1104.8 387.9L1105.2 457.0L1105.5 405.9L1105.8 465.1L1106.1 404.0L1106.4 444.0L1106.8 397.7L1107.1 467.3L1107.4 393.8L1107.7 458.7L1108.0 400.7L1108.4 458.8L1108.7 399.5L1109.0 462.4L1109.3 407.3L1109.6 438.7L1110.0 409.1L1110.3 435.3L1110.6 408.7L1110.9 436.8L1111.2 412.0L1111.6 460.4L1111.9 408.9L1112.2 444.9L1112.5 405.0L1112.8 433.5L1113.2 396.9L1113.5 449.6L1113.8 404.8L1114.1 454.5L1114.4 402.9L1114.8 437.8L1115.1 381.8L1115.4 445.0L1115.7 390.9L1116.0 438.4L1116.4 396.7L1116.7 445.7L1117.0 385.4L1117.3 439.7L1117.6 389.1L1118.0 440.7L1118.3 387.7L1118.6 449.5L1118.9 396.1L1119.2 452.7L1119.6 396.1L1119.9 459.1L1120.2 407.0L1120.5 436.1L1120.8 402.4L1121.2 453.1L1121.5 406.7L1121.8 432.6L1122.1 412.1L1122.4 428.5L1122.8 414.7L1123.1 423.8L1123.4 417.2L1123.7 419.7L1124.0 418.7L1124.4 418.7L1124.7 418.7L1125.0 418.7L1125.3 418.7L1125.6 418.7L1126.0 418.7L1126.3 418.7L1126.6 418.7L1126.9 418.7L1127.2 418.7L1127.6 418.7L1127.9 418.7L1128.2 418.7L1128.5 418.7L1128.8 418.7L1129.2 418.7L1129.5 418.7L1129.8 418.7L1130.1 418.7L1130.4 418.7L1130.8 418.7L1131.1 418.7L1131.4 418.7L1131.7 418.7L1132.0 418.7L1132.4 418.7L1132.7 418.7L1133.0 418.7L1133.3 418.7L1133.6 418.7L1134.0 418.7L1134.3 418.7L1134.6 418.7L1134.9 418.7L1135.2 418.7L1135.6 418.7L1135.9 418.7L1136.2 418.7L1136.5 418.7L1136.8 418.7L1137.2 418.7L1137.5 418.7L1137.8 418.7L1138.1 418.7L1138.4 418.7L1138.8 418.7L1139.1 418.7L1139.4 418.7L1139.7 418.7L1140.0 418.7L1140.4 418.7L1140.7 418.7L1141.0 418.7L1141.3 418.7L1141.6 418.7L1142.0 418.7L1142.3 418.7L1142.6 418.7L1142.9 418.7L1143.2 418.7L1143.6 418.7L1143.9 418.7L1144.2 418.7L1144.5 418.7L1144.8 418.7L1145.2 418.7L1145.5 418.7L1145.8 418.7L1146.1 418.7L1146.4 418.7L1146.8 418.7L1147.1 418.7L1147.4 418.7L1147.7 418.7L1148.0 418.7L1148.4 418.7L1148.7 418.7L1149.0 418.7L1149.3 418.7L1149.6 418.7L1150.0 418.7L1150.3 418.7L1150.6 418.7L1150.9 418.7L1151.2 418.7L1151.6 418.7L1151.9 418.7L1152.2 418.7L1152.5 418.7L1152.8 418.7L1153.2 418.7L1153.5 418.7L1153.8 418.7L1154.1 418.7L1154.4 418.7L1154.8 418.7L1155.1 418.7L1155.4 418.7L1155.7 418.7L1156.0 418.7L1156.4 418.7L1156.7 418.7L1157.0 418.7L1157.3 418.7L1157.6 418.7L1158.0 418.7L1158.3 418.7L1158.6 418.7L1158.9 418.7L1159.2 418.7L1159.6 418.7L1159.9 418.7L1160.2 418.7L1160.5 418.7L1160.8 418.7L1161.2 418.7L1161.5 418.7L1161.8 418.7L1162.1 418.7L1162.4 418.7L1162.8 418.7L1163.1 418.7L1163.4 418.7L1163.7 418.7L1164.0 418.7L1164.4 418.7L1164.7 418.7L1165.0 418.7L1165.3 418.7L1165.6 418.7L1166.0 418.7L1166.3 418.7L1166.6 418.7L1166.9 418.7L1167.2 418.7L1167.6 418.7L1167.9 418.7L1168.2 418.7L1168.5 418.7L1168.8 418.7L1169.2 418.7L1169.5 418.7L1169.8 418.7L1170.1 418.7L1170.4 418.7L1170.8 418.7L1171.1 418.7L1171.4 418.7L1171.7 418.7L1172.0 418.7L1172.4 418.7L1172.7 418.7L1173.0 418.7L1173.3 418.7L1173.6 418.7L1174.0 418.7L1174.3 418.7L1174.6 418.7L1174.9 418.7L1175.2 418.7L1175.6 418.7L1175.9 418.7L1176.2 418.7L1176.5 418.7L1176.8 418.7L1177.2 418.7L1177.5 418.7L1177.8 418.7L1178.1 418.7L1178.4 418.7L1178.8 418.7L1179.1 418.7L1179.4 418.7L1179.7 418.7L1180.0 418.7" stroke="#77ac30" stroke-width="1.600"/>
</g>
<path d="M890.1 683.5v-3.3M890.1 154.4v3.3M919.8 683.5v-3.3M919.8 154.4v3.3M949.5 683.5v-6M949.5 154.4v6M979.1 683.5v-3.3M979.1 154.4v3.3M1008.8 683.5v-3.3M1008.8 154.4v3.3M1038.4 683.5v-6M1038.4 154.4v6M1068.0 683.5v-3.3M1068.0 154.4v3.3M1097.7 683.5v-3.3M1097.7 154.4v3.3M1127.3 683.5v-6M1127.3 154.4v6M1157.0 683.5v-3.3M1157.0 154.4v3.3M860.5 656.2h6M1180.4 656.2h-6M860.5 626.5h3.3M1180.4 626.5h-3.3M860.5 596.8h6M1180.4 596.8h-6M860.5 567.1h3.3M1180.4 567.1h-3.3M860.5 537.5h6M1180.4 537.5h-6M860.5 507.8h3.3M1180.4 507.8h-3.3M860.5 478.1h6M1180.4 478.1h-6M860.5 448.4h3.3M1180.4 448.4h-3.3M860.5 418.7h6M1180.4 418.7h-6M860.5 389.0h3.3M1180.4 389.0h-3.3M860.5 359.3h6M1180.4 359.3h-6M860.5 329.6h3.3M1180.4 329.6h-3.3M860.5 299.9h6M1180.4 299.9h-6M860.5 270.2h3.3M1180.4 270.2h-3.3M860.5 240.6h6M1180.4 240.6h-6M860.5 210.9h3.3M1180.4 210.9h-3.3M860.5 181.2h6M1180.4 181.2h-6" stroke="#111" stroke-width="1" fill="none" shape-rendering="crispEdges"/>
<rect x="860.5" y="154.4" width="319.9000000000001" height="529.1" fill="none" stroke="#000" stroke-width="1.300"/>
<text x="855.5" y="660.4200000000001" font-size="12" fill="#262626" font-weight="normal" text-anchor="end">-0.8</text>
<text x="855.5" y="601.0400000000001" font-size="12" fill="#262626" font-weight="normal" text-anchor="end">-0.6</text>
<text x="855.5" y="541.6600000000001" font-size="12" fill="#262626" font-weight="normal" text-anchor="end">-0.4</text>
<text x="855.5" y="482.28" font-size="12" fill="#262626" font-weight="normal" text-anchor="end">-0.2</text>
<text x="855.5" y="422.9" font-size="12" fill="#262626" font-weight="normal" text-anchor="end">0</text>
<text x="855.5" y="363.52" font-size="12" fill="#262626" font-weight="normal" text-anchor="end">0.2</text>
<text x="855.5" y="304.14" font-size="12" fill="#262626" font-weight="normal" text-anchor="end">0.4</text>
<text x="855.5" y="244.75999999999996" font-size="12" fill="#262626" font-weight="normal" text-anchor="end">0.6</text>
<text x="855.5" y="185.38" font-size="12" fill="#262626" font-weight="normal" text-anchor="end">0.8</text>
<text x="860.5" y="699.5" font-size="12" fill="#262626" font-weight="normal" text-anchor="middle">0</text>
<text x="949.45" y="699.5" font-size="12" fill="#262626" font-weight="normal" text-anchor="middle">0.3</text>
<text x="1038.4" y="699.5" font-size="12" fill="#262626" font-weight="normal" text-anchor="middle">0.6</text>
<text x="1127.35" y="699.5" font-size="12" fill="#262626" font-weight="normal" text-anchor="middle">0.9</text>
<text x="1020.5" y="716" font-size="14.6" fill="#262626" font-weight="normal" text-anchor="middle" textLength="53.5" lengthAdjust="spacingAndGlyphs">Time (s)</text>
<rect x="887.500" y="189.500" width="162" height="58.300" fill="#fff" stroke="#000" stroke-width="1"/>
<rect x="892.600" y="201.200" width="31.500" height="1" fill="#0072bd"/>
<rect x="892.600" y="218.400" width="31.500" height="2" fill="#d95319"/>
<rect x="892.600" y="236.400" width="31.500" height="2" fill="#77ac30"/>
<text x="926.6" y="205" font-size="13" fill="#1a1a1a" font-weight="normal" text-anchor="start">sheep</text>
<text x="926.6" y="222.8" font-size="13" fill="#1a1a1a" font-weight="normal" text-anchor="start">sheep1</text>
<text x="926.6" y="240.8" font-size="13" fill="#1a1a1a" font-weight="normal" text-anchor="start" textLength="120.3" lengthAdjust="spacingAndGlyphs">sheep1_compressed</text>
<rect x="821" y="424" width="1.300" height="2" fill="#111"/>
<rect x="821" y="727" width="379" height="1" fill="#808080"/>
<rect x="821" y="728" width="379" height="22" fill="#e6e6e6"/>
</svg>
<svg class="abs" style="left:821.300px;top:121px" width="378.700" height="23" viewBox="821.300 121 378.700 23" font-family='"Liberation Sans",sans-serif'>
<rect x="821.300" y="121" width="378.700" height="23" fill="#fff"/>
<rect x="821.3" y="121" width="10" height="22" fill="#fafafa"/><rect x="831.3" y="121" width="1" height="23" fill="#c4c4c4"/><rect x="821.3" y="143" width="11" height="1" fill="#c4c4c4"/><rect x="824.8" y="126.8" width="4" height="1" fill="#9a9a9a"/><rect x="824.8" y="128.8" width="4" height="1" fill="#9a9a9a"/><rect x="824.8" y="130.8" width="4" height="1" fill="#9a9a9a"/><rect x="824.8" y="132.8" width="4" height="1" fill="#9a9a9a"/>
<rect x="831.300" y="121" width="213" height="2.800" fill="#a3a3a3"/>
<rect x="1044" y="121" width="1" height="23" fill="#c4c4c4"/>
<rect x="1044" y="143" width="156" height="1" fill="#c4c4c4"/>
<text x="839.5" y="137.8" font-size="12.5" fill="#555" font-weight="normal" text-anchor="start" textLength="185.7" lengthAdjust="spacingAndGlyphs">Reconstructed-Compressed Signal</text>
<rect x="1177.9" y="126.8" width="2" height="2" fill="#595959"/><rect x="1177.9" y="131" width="2" height="2" fill="#595959"/><rect x="1177.9" y="135.2" width="2" height="2" fill="#595959"/>
</svg>

</div>
</body></html>
